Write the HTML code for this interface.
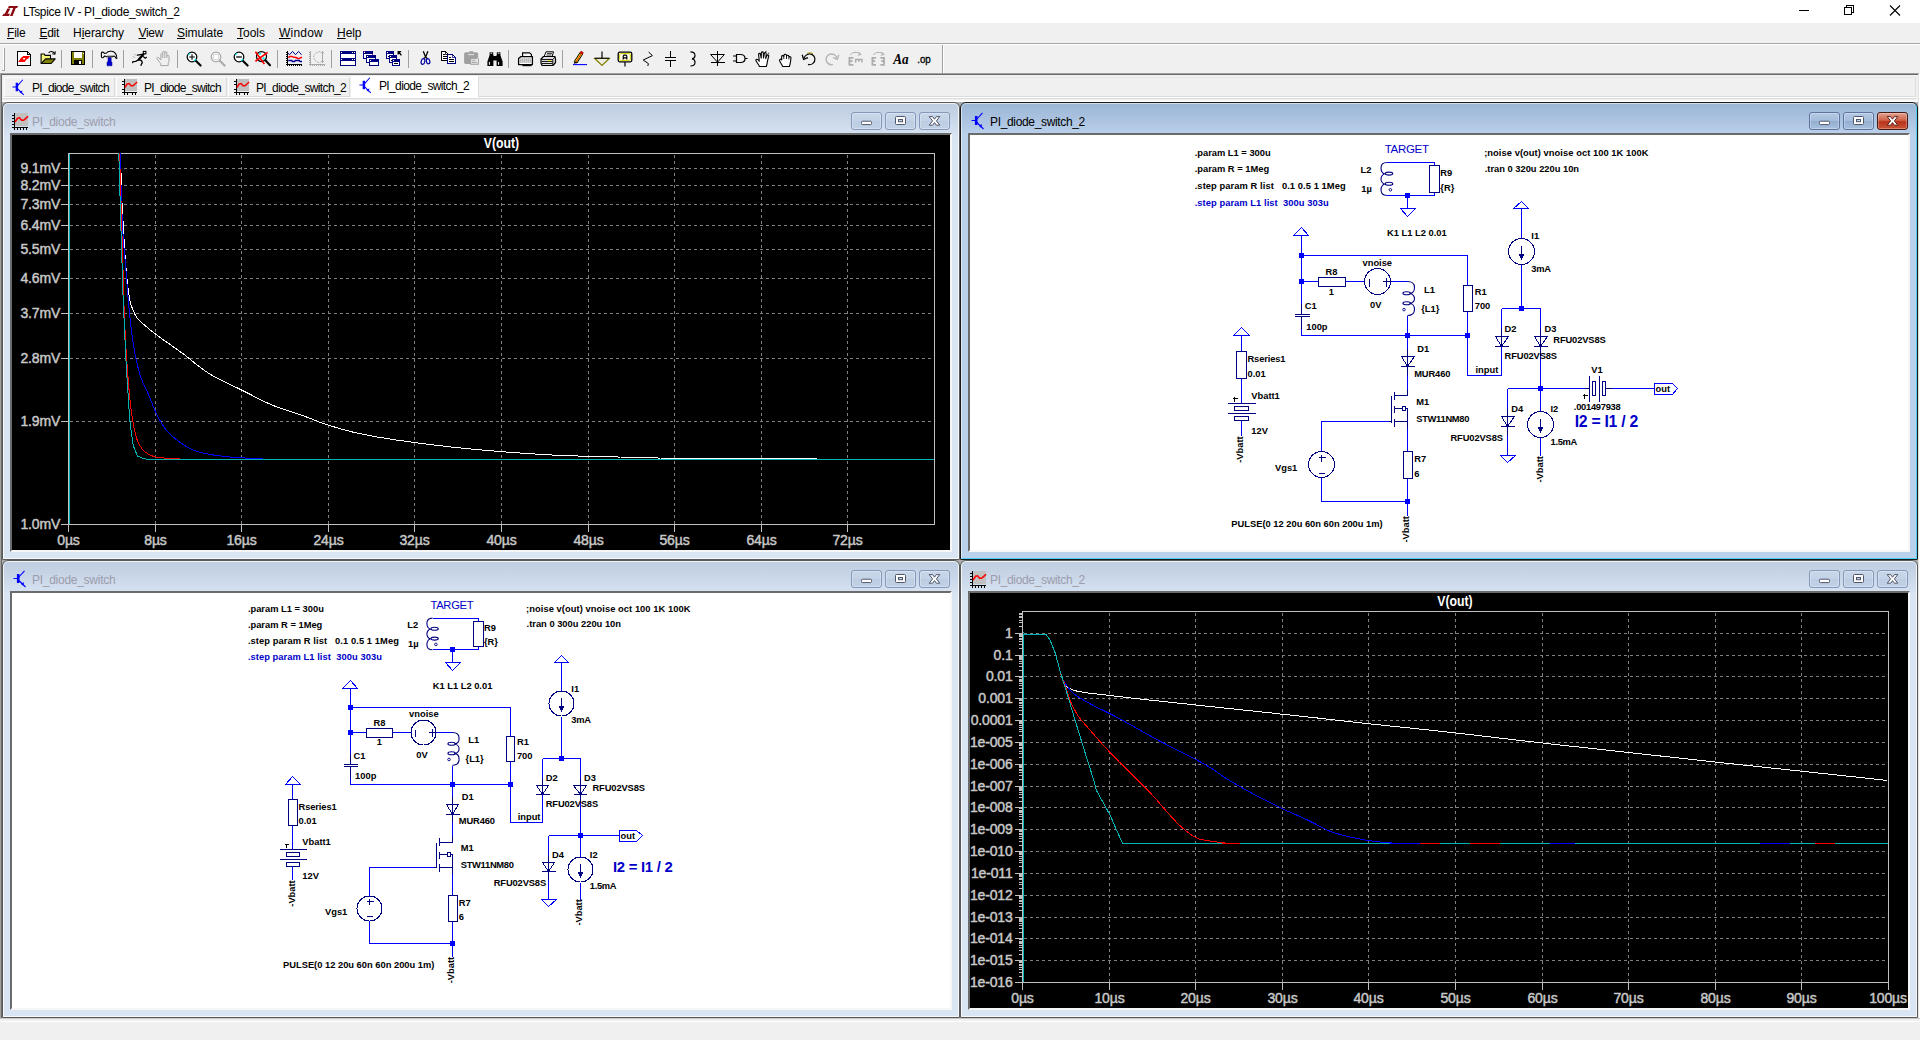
<!DOCTYPE html><html><head><meta charset="utf-8"><title>LTspice IV - PI_diode_switch_2</title><style>

html,body{margin:0;padding:0}
body{width:1920px;height:1040px;overflow:hidden;background:#f0f0f0;position:relative;font-family:"Liberation Sans",sans-serif;font-size:12px;color:#000}
.abs{position:absolute}
.t{position:absolute;white-space:pre;line-height:1}
svg{position:absolute;left:0;top:0;overflow:visible}


#tb{position:absolute;left:0;top:0;width:1920px;height:23px;background:#fff}
#mb{position:absolute;left:0;top:23px;width:1920px;height:20px;background:#f0f0f0}
#mb .t{top:3px;font-size:12px;line-height:14px}
#mb u{text-decoration:underline;text-underline-offset:1px}
#tl{position:absolute;left:0;top:43px;width:1920px;height:31px;background:#f0f0f0;border-top:1px solid #a6a6a6;box-sizing:border-box}
#tabs{position:absolute;left:0;top:73px;width:1920px;height:29px;background:#f0f0f0;box-sizing:border-box}
.tab{position:absolute;top:4px;height:20px;box-sizing:border-box;border:1px solid #dadada;border-left-color:#fcfcfc;border-top-color:#fcfcfc;background:#f0f0f0}
.tab.act{background:#fff;border-color:#fff;top:3px;height:22px}
.tab .t{font-size:12px;line-height:14px;top:3px}
#sb{position:absolute;left:0;top:1018px;width:1920px;height:22px;background:#f0f0f0}


.win{position:absolute;box-sizing:border-box;border:1px solid #5a5a5a;border-radius:6px 6px 1px 1px;overflow:hidden}
.win.in{background:linear-gradient(#c0cee1 0px,#c6d4e6 12px,#d6e2f1 31px,#d9e5f3 34px,#d9e5f3 100%)}
.win.ac{background:linear-gradient(#9ab5d5 0px,#a6bfdd 12px,#bad0eb 31px,#b9d1ea 34px,#b9d1ea 100%);border-color:#1a1a1a}
.win .hl{position:absolute;left:0;top:0;right:0;bottom:0;border:1px solid rgba(255,255,255,.75);border-radius:5px 5px 0 0;pointer-events:none}
.win.ac .hl{border-color:rgba(255,255,255,.55) #4fcff5 #4fcff5 rgba(255,255,255,.55)}
.win .cl{position:absolute;left:7px;top:30px;box-sizing:border-box;width:942px;height:419px;border-style:solid;border-width:2px;border-color:#6b6b6b #f6f6f6 #f6f6f6 #6b6b6b;overflow:hidden}
.win .cl::before{content:"";position:absolute;left:-2px;top:-2px;right:-2px;bottom:-2px;border:1px solid;border-color:#9a9ea6 transparent transparent #9a9ea6;pointer-events:none}
.win .tt{position:absolute;left:29px;top:12px;font-size:12px;line-height:14px;white-space:pre}
.win.in .tt{color:#9c9cac}
.win.ac .tt{color:#000}
.wb{position:absolute;top:9px;width:31px;height:18px;box-sizing:border-box;border:1px solid #8597ba;border-radius:3px;background:linear-gradient(#c9d7e9,#c3d2e6 48%,#bccce2 52%,#c2d2e6);box-shadow:inset 0 0 0 1px rgba(255,255,255,.3)}
.win.ac .wb{border-color:#5d74a0;background:linear-gradient(#b4c9e4,#a4bcdb 50%,#94aed2 52%,#a8c0de)}
.win.ac .wb.x{border-color:#4a1810;background:linear-gradient(#e0a090,#d0634a 45%,#b8341a 55%,#c9543a);box-shadow:inset 0 0 0 1px rgba(255,255,255,.3)}

</style></head><body>
<div id="tb">
<svg width="16" height="14" viewBox="0 0 16 14" style="left:2px;top:5px"><g fill="#8c0a14"><path d="M5.4 3.4H8.4L5.6 8.8H8L7 10.9H0.2L1.6 8.8H2.8Z"/><path d="M6.9 1.1H16L15.2 3H13.8L10.6 10.9H8L11.2 3H6Z"/></g></svg>
<div class="t" style="left:23px;top:5px;font-size:12px;line-height:14px;letter-spacing:-0.31px">LTspice IV - PI_diode_switch_2</div>
<svg width="140" height="23" viewBox="0 0 140 23" style="left:1780px;top:0" shape-rendering="crispEdges"><g stroke="#000" fill="none" stroke-width="1"><path d="M19 10.5H29"/><path d="M64.5 7.5H71.5V14.5H64.5Z"/><path d="M66.5 7.5V5.5H73.5V12.5H71.5"/></g><g stroke="#000" fill="none" stroke-width="1.1" shape-rendering="auto"><path d="M110 5.5L120 15.5M120 5.5L110 15.5"/></g></svg>
</div>
<div id="mb">
<div class="t" style="left:7px;letter-spacing:-0.21px"><u>F</u>ile</div>
<div class="t" style="left:39.5px;letter-spacing:-0.3px"><u>E</u>dit</div>
<div class="t" style="left:73px;letter-spacing:-0.04px">H<u>i</u>erarchy</div>
<div class="t" style="left:138.5px;letter-spacing:-0.32px"><u>V</u>iew</div>
<div class="t" style="left:177px;letter-spacing:-0.09px"><u>S</u>imulate</div>
<div class="t" style="left:237px;letter-spacing:0px"><u>T</u>ools</div>
<div class="t" style="left:279px;letter-spacing:0.22px"><u>W</u>indow</div>
<div class="t" style="left:337px;letter-spacing:-0.05px"><u>H</u>elp</div>
</div>
<div id="tl">
<div class="abs" style="left:0;top:0;width:1920px;height:1px;background:#fff"></div>
<div class="abs" style="left:3px;top:4px;width:1px;height:22px;background:#fff"></div><div class="abs" style="left:4px;top:4px;width:1px;height:22px;background:#a0a0a0"></div><div class="abs" style="left:2px;top:26px;width:3px;height:1px;background:#a0a0a0"></div>
<svg width="16" height="16" viewBox="0 0 16 16" style="left:16px;top:7px"><g shape-rendering="crispEdges"><path d="M1.5 0.5H11.5L14.5 3.5V14.5H1.5Z" fill="#fff" stroke="#000"/><path d="M11.5 0.5V3.5H14.5" fill="none" stroke="#000"/></g><path d="M2.1 10.9L5 7L7.3 5H14L12.4 7.6L11 8L8.6 10.9Z" fill="#ff0000"/><path d="M7.4 7H9.4L8.8 8.6H6.8Z" fill="#fff"/></svg>
<svg width="16" height="16" viewBox="0 0 16 16" style="left:39.5px;top:6px"><path d="M1.1 13.4V4H4.2L5.1 5.4H10.5V9" fill="#f6f67a" stroke="#000" stroke-width="1.1"/><path d="M1.2 13.5L5.6 8.9H15.2L11.2 13.5Z" fill="#808000" stroke="#000" stroke-width="1.1" stroke-linejoin="round"/><path d="M8.6 3C9.8 1.2 12.8 0.8 14.6 3.4" fill="none" stroke="#000" stroke-width="1.1"/><path d="M15.3 1.4L14.9 4.2L12.2 3.7" fill="none" stroke="#000" stroke-width="1.1"/></svg>
<div class="abs" style="left:61px;top:6px;width:1px;height:18px;background:#a0a0a0"></div>
<svg width="16" height="16" viewBox="0 0 16 16" style="left:70px;top:6px"><g shape-rendering="crispEdges"><rect x="1.5" y="1.5" width="13" height="13" fill="#808000" stroke="#000"/><rect x="4" y="2" width="8" height="5.5" fill="#fff"/><rect x="4" y="10" width="7.5" height="4.5" fill="#000"/><rect x="9" y="11" width="1.6" height="3" fill="#fff"/><rect x="13" y="2.5" width="1" height="1.2" fill="#fff"/></g></svg>
<div class="abs" style="left:92px;top:6px;width:1px;height:18px;background:#a0a0a0"></div>
<svg width="16" height="16" viewBox="0 0 16 16" style="left:101px;top:7px"><path d="M7 6.6H10.2V11H11V14.8H6V11H7Z" fill="#0000d0" stroke="#000090" stroke-width=".5"/><path d="M0.4 2.2C0.4 1.2 1 1 1.8 1L3.6 2.4L5.6 2C6.4 0.7 7.4 0.2 9 0.2H10.6C12.4 0.2 13.4 1.2 14.4 2.4C15.4 3.6 16 4.8 15.8 7.4L14.7 7C14.7 6 14.2 5.4 13 5L11.4 5.8H5.6L3.8 5L1.8 6.8C0.8 6.8 0.4 6.2 0.4 5.4Z" fill="#f2f2f2" stroke="#000" stroke-width="1.1" stroke-linejoin="round"/><path d="M6 4.6H12.6" stroke="#b0b0b0" stroke-width="1"/></svg>
<div class="abs" style="left:123px;top:6px;width:1px;height:18px;background:#a0a0a0"></div>
<svg width="16" height="16" viewBox="0 0 16 16" style="left:131.5px;top:7px"><g fill="none" stroke="#000" stroke-linecap="round" stroke-linejoin="round"><path d="M11.4 3.2L6.8 8.6" stroke-width="2.3"/><path d="M10.3 3.4L5.4 4.2" stroke-width="1.2"/><path d="M6.6 8.75L3.7 10.4L0.9 10.6L0.7 11.6" stroke-width="1.3"/><path d="M6.8 8.6L9.5 9.6L10.3 11.7L9.1 13.75L9 14.4" stroke-width="1.3"/><path d="M11.4 5.6L13.2 7.2L14.4 6.3" stroke-width="1.2"/></g><rect x="11.3" y="0.4" width="2.6" height="2.4" fill="#fff" stroke="#000" stroke-width="1.1"/><path d="M0.8 5.4L3.2 6.6M2.2 3.4L4.6 4.4" stroke="#a8a8a8" stroke-width=".8"/></svg>
<svg width="16" height="16" viewBox="0 0 16 16" style="left:154.5px;top:7px"><path d="M5.9 9V3.3Q5.9 2.5 6.8 2.5Q7.75 2.5 7.75 3.3V7M7.75 3.3V1.2Q7.75 0.4 8.8 0.4Q9.8 0.4 9.8 1.2V7M9.8 1.6Q9.8 0.8 10.85 0.8Q11.9 0.8 11.9 1.6V7M11.9 5.2Q11.9 4.4 12.95 4.4Q14 4.4 14 5.2V10.6L13.2 12.6V14.6H5.7V12.6L2 7.6Q1.6 6.6 2.6 6.3Q3.4 6.2 3.9 6.9L5.9 9" fill="none" stroke="#a6a6a6" stroke-width="1" stroke-linejoin="round"/></svg>
<div class="abs" style="left:177px;top:6px;width:1px;height:18px;background:#a0a0a0"></div>
<svg width="16" height="16" viewBox="0 0 16 16" style="left:186px;top:7px"><circle cx="6" cy="6" r="4.8" fill="#fff" stroke="#000" stroke-width="1.25"/><path d="M9.8 9.8L14.6 14.6" stroke="#000" stroke-width="2.1" stroke-linecap="round"/><path d="M2.2 4.2L4.2 2.2" stroke="#00e0e0" stroke-width="1.2"/><path d="M8 10.2L10.2 8" stroke="#00e0e0" stroke-width="1.2"/><path d="M3.2 6H8.8M6 3.2V8.8" stroke="#000" stroke-width="1.1"/></svg>
<svg width="16" height="16" viewBox="0 0 16 16" style="left:209.5px;top:7px"><circle cx="6" cy="6" r="4.8" fill="#fff" stroke="#a8a8a8" stroke-width="1.25"/><path d="M9.8 9.8L14.6 14.6" stroke="#a8a8a8" stroke-width="2.1" stroke-linecap="round"/><circle cx="6" cy="6" r="3" fill="none" stroke="#d0d0d0" stroke-width="1"/></svg>
<svg width="16" height="16" viewBox="0 0 16 16" style="left:232.5px;top:7px"><circle cx="6" cy="6" r="4.8" fill="#fff" stroke="#000" stroke-width="1.25"/><path d="M9.8 9.8L14.6 14.6" stroke="#000" stroke-width="2.1" stroke-linecap="round"/><path d="M2.2 4.2L4.2 2.2" stroke="#00e0e0" stroke-width="1.2"/><path d="M8 10.2L10.2 8" stroke="#00e0e0" stroke-width="1.2"/><path d="M3.2 6H8.8" stroke="#000" stroke-width="1.3"/></svg>
<svg width="16" height="16" viewBox="0 0 16 16" style="left:255px;top:7px"><circle cx="6.5" cy="5.5" r="5" fill="#fff" stroke="#000" stroke-width="1.25"/><path d="M10.6 9.6L15 14.2" stroke="#000" stroke-width="2.1" stroke-linecap="round"/><path d="M4 3.2L6 2.6M7.6 8.4L9.4 6.4" stroke="#00e8e8" stroke-width="1.6"/><path d="M0.4 0.8L9.4 13M12.6 1.4L0.4 10.2" stroke="#ff0000" stroke-width="1.7"/></svg>
<div class="abs" style="left:277px;top:6px;width:1px;height:18px;background:#a0a0a0"></div>
<svg width="16" height="16" viewBox="0 0 16 16" style="left:286px;top:7px"><g shape-rendering="crispEdges" fill="#000"><rect x="1" y="0" width="1" height="14"/><rect x="0" y="13" width="16" height="1"/><rect x="0" y="1" width="1" height="1"/><rect x="0" y="3" width="1" height="1"/><rect x="0" y="5" width="1" height="1"/><rect x="0" y="7" width="1" height="1"/><rect x="0" y="9" width="1" height="1"/><rect x="0" y="11" width="1" height="1"/><rect x="1" y="14" width="1" height="1"/><rect x="3" y="14" width="1" height="1"/><rect x="5" y="14" width="1" height="1"/><rect x="7" y="14" width="1" height="1"/><rect x="9" y="14" width="1" height="1"/><rect x="11" y="14" width="1" height="1"/><rect x="13" y="14" width="1" height="1"/><rect x="15" y="14" width="1" height="1"/></g><polyline points="2.25,2.1 3.5,3.75 6.6,0.4 9.5,3.75 12.5,0.4 15.6,3.75" fill="none" stroke="#000090" stroke-width="1"/><polyline points="2.25,6.5 4.3,5.4 6,5.4 7.7,6.3 10.2,6.5 11.8,7.5 13.5,7.5 14.75,6.5 16,6.5" fill="none" stroke="#ff0000" stroke-width="1.5"/><polyline points="2.25,9.6 5.6,9.6 6.6,10.6 8.5,10.6 9.3,9.6 13.1,9.6 14.3,10.6 16,10.6" fill="none" stroke="#000090" stroke-width="1.5"/></svg>
<svg width="16" height="16" viewBox="0 0 16 16" style="left:309px;top:7px"><g shape-rendering="crispEdges" fill="#a8a8a8"><rect x="1" y="0" width="1" height="14"/><rect x="0" y="13" width="16" height="1"/><rect x="0" y="1" width="1" height="1"/><rect x="0" y="3" width="1" height="1"/><rect x="0" y="5" width="1" height="1"/><rect x="0" y="7" width="1" height="1"/><rect x="0" y="9" width="1" height="1"/><rect x="0" y="11" width="1" height="1"/><rect x="1" y="14" width="1" height="1"/><rect x="3" y="14" width="1" height="1"/><rect x="5" y="14" width="1" height="1"/><rect x="7" y="14" width="1" height="1"/><rect x="9" y="14" width="1" height="1"/><rect x="11" y="14" width="1" height="1"/><rect x="13" y="14" width="1" height="1"/><rect x="15" y="14" width="1" height="1"/></g><path d="M11.3 0.6C7 1 4.8 3.4 4.8 6.2C4.8 9 7 11.2 11.3 11.6" fill="none" stroke="#a8a8a8" stroke-width="1" stroke-dasharray="1.6 1"/><path d="M13.5 0.6V11.6M11.9 2.3L13.5 0.6L15.1 2.3M11.9 9.9L13.5 11.6L15.1 9.9" fill="none" stroke="#a8a8a8" stroke-width="1"/></svg>
<div class="abs" style="left:331px;top:6px;width:1px;height:18px;background:#a0a0a0"></div>
<svg width="16" height="16" viewBox="0 0 16 16" style="left:339.5px;top:7px"><g shape-rendering="crispEdges"><rect x="0" y="0" width="16" height="8" fill="#000080"/><rect x="1" y="3" width="14" height="4" fill="#fff"/><rect x="1" y="1" width="1" height="1" fill="#fff"/><rect x="12" y="1" width="1" height="1" fill="#fff"/><rect x="14" y="1" width="1" height="1" fill="#fff"/><rect x="0" y="7" width="16" height="8" fill="#000080"/><rect x="1" y="10" width="14" height="4" fill="#fff"/><rect x="1" y="8" width="1" height="1" fill="#fff"/><rect x="12" y="8" width="1" height="1" fill="#fff"/><rect x="14" y="8" width="1" height="1" fill="#fff"/></g></svg>
<svg width="16" height="16" viewBox="0 0 16 16" style="left:363px;top:7px"><g shape-rendering="crispEdges"><rect x="0" y="0" width="10" height="8" fill="#000080"/><rect x="1" y="3" width="8" height="4" fill="#fff"/><rect x="1" y="1" width="1" height="1" fill="#fff"/><rect x="3" y="4" width="10" height="8" fill="#000080"/><rect x="4" y="7" width="8" height="4" fill="#fff"/><rect x="4" y="5" width="1" height="1" fill="#fff"/><rect x="6" y="8" width="10" height="7" fill="#000080"/><rect x="7" y="11" width="8" height="3" fill="#fff"/><rect x="7" y="9" width="1" height="1" fill="#fff"/><rect x="1" y="0" width="1" height="1" fill="#d0208c"/><rect x="9" y="3" width="1" height="1" fill="#d0208c"/></g></svg>
<svg width="16" height="16" viewBox="0 0 16 16" style="left:386px;top:7px"><g shape-rendering="crispEdges"><rect x="0" y="0" width="8" height="8" fill="#000080"/><rect x="1" y="3" width="6" height="4" fill="#fff"/><rect x="1" y="1" width="1" height="1" fill="#fff"/><rect x="3" y="4" width="8" height="8" fill="#000080"/><rect x="4" y="7" width="6" height="4" fill="#fff"/><rect x="4" y="5" width="1" height="1" fill="#fff"/><rect x="6" y="8" width="8" height="7" fill="#000080"/><rect x="7" y="11" width="6" height="3" fill="#fff"/><rect x="7" y="9" width="1" height="1" fill="#fff"/><rect x="8" y="12" width="4" height="1" fill="#000"/><rect x="2" y="5" width="1.4" height="1" fill="#000"/><rect x="5" y="9" width="1.4" height="1" fill="#000"/></g><path d="M15.4 4.4L12.8 1M12.2 3.6V0.6H15.2" fill="none" stroke="#000" stroke-width="1.3"/></svg>
<div class="abs" style="left:408px;top:6px;width:1px;height:18px;background:#a0a0a0"></div>
<svg width="16" height="16" viewBox="0 0 16 16" style="left:417px;top:7px"><path d="M6.3 0.2L8.6 6.2L10.6 7.8M10.9 0.2L8.6 6.2L6.6 7.6" stroke="#000" stroke-width="1.3" fill="none"/><ellipse cx="6" cy="10.5" rx="1.8" ry="3" fill="none" stroke="#0000a0" stroke-width="1.2" transform="rotate(12 6 10.5)"/><ellipse cx="11.1" cy="10.2" rx="1.7" ry="2.6" fill="none" stroke="#0000a0" stroke-width="1.2" transform="rotate(-12 11.1 10.2)"/></svg>
<svg width="16" height="16" viewBox="0 0 16 16" style="left:438.5px;top:7px"><g shape-rendering="crispEdges"><path d="M2.5 0.5H6.5L9.5 3.5V9.5H2.5Z" fill="#fff" stroke="#000"/><path d="M4 3.5H6M4 5.5H8M4 7.5H8" stroke="#000"/><path d="M8.5 3.5H13.5L16.5 6.5V12.5H8.5Z" fill="#fff" stroke="#000080"/><path d="M10 6.5H12M10 8.5H15M10 10.5H15" stroke="#000"/></g><path d="M6.5 0.5V3.5H9.5" fill="none" stroke="#000" stroke-width=".8"/><path d="M13.5 3.5V6.5H16.5" fill="none" stroke="#000080" stroke-width=".8"/></svg>
<svg width="16" height="16" viewBox="0 0 16 16" style="left:463px;top:7px"><rect x="1.1" y="1.25" width="14" height="11.65" rx="1.6" fill="#a0a0a0"/><rect x="6.3" y="0.2" width="3.8" height="1.6" fill="#a0a0a0"/><rect x="5.1" y="3.1" width="5.8" height="1" fill="#e4e4e4"/><rect x="7.7" y="7.6" width="7.7" height="5.7" fill="#e8e8e8" stroke="#a0a0a0" stroke-width="1"/><path d="M9 9.7H12.4M9 11.5H14" stroke="#a8a8a8" stroke-width="1"/><rect x="14" y="7.1" width="1.2" height="1.2" fill="#e8e8e8"/></svg>
<svg width="16" height="16" viewBox="0 0 16 16" style="left:487px;top:7px"><g fill="#000"><path d="M2.6 1.2H6.2V4.2L7 5H9L9.8 4.2V1.2H13.4V4.2L15.6 10.5V15H9.6V9.4H6.4V15H0.4V10.5L2.6 4.2Z"/></g><path d="M3.6 2.2H5.2M10.8 2.2H12.4" stroke="#fff" stroke-width="1"/><path d="M2.4 11V13.8M11.6 11V13.8" stroke="#fff" stroke-width="1"/></svg>
<div class="abs" style="left:508px;top:6px;width:1px;height:18px;background:#a0a0a0"></div>
<svg width="16" height="16" viewBox="0 0 16 16" style="left:517px;top:7px"><path d="M5.6 5.2V1.8H12.6L14.4 3.4V5.2" fill="#fff" stroke="#000" stroke-width="1.2"/><path d="M8 2.2L9 3.4L10 2.2" fill="none" stroke="#909090" stroke-width=".8"/><path d="M1.6 7.6L4 5.6H15.4V13.6H1.6Z" fill="#fff" stroke="#000" stroke-width="1.3" stroke-linejoin="round"/><rect x="3" y="7.2" width="11" height="4.6" fill="#cfcfcf"/><path d="M3 8H14M3 9.6H14M3 11.2H14" stroke="#a0a0a0" stroke-width=".7" stroke-dasharray="1 1"/><path d="M5.4 14.6H14.6" stroke="#000" stroke-width="1.2"/></svg>
<svg width="16" height="16" viewBox="0 0 16 16" style="left:540px;top:7px"><path d="M4 6L6 0.8H13.5L12 6Z" fill="#fff" stroke="#000" stroke-linejoin="round"/><path d="M7 2.4H12M6.5 4H11.5" stroke="#000" stroke-width=".8"/><path d="M1 12V8L3.5 5.5H15L15.5 8V11.5L13 14.5H2Z" fill="#e0e0e0" stroke="#000" stroke-width="1.2" stroke-linejoin="round"/><path d="M1.2 8.5H12.8L15 6M12.8 8.5V14M1.5 10.5H12.5M2 12.5H12.5" fill="none" stroke="#000" stroke-width=".9"/><rect x="8" y="9.2" width="3" height="1" fill="#e8e000"/></svg>
<div class="abs" style="left:562px;top:6px;width:1px;height:18px;background:#a0a0a0"></div>
<svg width="16" height="16" viewBox="0 0 16 16" style="left:572px;top:7px"><path d="M1 13.6H15" stroke="#0000ff" stroke-width="1.1"/><path d="M2.4 10.4L8 1.6L10.6 3.2L5 12Z" fill="#f4e400" stroke="#000" stroke-width="1" stroke-linejoin="round"/><path d="M8 1.6L9 0.3L11.2 1.6L10.6 3.2Z" fill="#e00000" stroke="#c00000" stroke-width=".8"/><path d="M2.4 10.4L1.8 12.8L5 12Z" fill="#000"/><path d="M4 11L9.2 2.8" stroke="#e00000" stroke-width=".9"/></svg>
<svg width="16" height="16" viewBox="0 0 16 16" style="left:593.5px;top:7px"><path d="M8 0.5V7.5" stroke="#000" stroke-width="1.2"/><path d="M0.8 7.5H15.2L8 14.5Z" fill="#ecece0" stroke="#808000" stroke-width="1.2" stroke-linejoin="miter"/><path d="M0.5 7.2H15.5" stroke="#000" stroke-width="1.1"/></svg>
<svg width="16" height="16" viewBox="0 0 16 16" style="left:616.5px;top:7px"><rect x="1.2" y="1.2" width="13.6" height="9.6" rx="1.5" fill="#fffff0" stroke="#000" stroke-width="1.3"/><rect x="2.6" y="2.6" width="10.8" height="6.8" rx="1" fill="none" stroke="#d8d000" stroke-width="1"/><path d="M8 11V15.5" stroke="#000" stroke-width="1.2"/><path d="M6.2 8.6V5.2L7 4.2H9L9.8 5.2V8.6M6.2 6.8H9.8" fill="none" stroke="#000" stroke-width="1.2"/></svg>
<svg width="16" height="16" viewBox="0 0 16 16" style="left:639.5px;top:7px"><path d="M8.6 1L12.4 4.6L3.2 9L8.4 12.6L7.8 15" fill="none" stroke="#000" stroke-width="1" stroke-linejoin="miter"/></svg>
<svg width="16" height="16" viewBox="0 0 16 16" style="left:662.5px;top:7px"><g shape-rendering="crispEdges" fill="#000"><rect x="7" y="0" width="1" height="6"/><rect x="2" y="6" width="11" height="1"/><rect x="2" y="9" width="11" height="1"/><rect x="7" y="10" width="1" height="6"/></g></svg>
<svg width="16" height="16" viewBox="0 0 16 16" style="left:685px;top:7px"><path d="M5.4 0.8C8 0.8 10 2.2 10 4.6C10 6.6 8.6 7.6 7 7.8C8.6 8 10 9 10 11.2C10 13.8 8 15 5.4 15" fill="none" stroke="#000" stroke-width="1.2"/></svg>
<svg width="16" height="16" viewBox="0 0 16 16" style="left:709px;top:7px"><g shape-rendering="crispEdges" fill="none" stroke="#000" stroke-width="1"><path d="M8.5 0V15M1.5 11.5H15.5"/></g><path d="M1.6 3.5H15.4L8.5 11.2Z" fill="none" stroke="#000" stroke-width="1"/></svg>
<svg width="16" height="16" viewBox="0 0 16 16" style="left:732px;top:7px"><path d="M4.5 3.5H8.5C11.5 3.5 13 5.5 13 7.5C13 9.5 11.5 11.5 8.5 11.5H4.5Z" fill="#f4f4f4" stroke="#000" stroke-width="1.2"/><path d="M1 5H4.5M1 10H4.5M13 7.5H15.6" stroke="#000" stroke-width="1.1"/></svg>
<svg width="16" height="16" viewBox="0 0 16 16" style="left:754.5px;top:7px"><path d="M4.5 15.5C3.5 13 1.2 10.8 0.8 9.2C0.8 8 2.2 7.8 3.2 9L4.3 10.2L3.6 3.4C3.5 2.1 5.2 2 5.4 3.2L6.2 7.2L6.4 1.8C6.5 0.5 8.2 0.5 8.3 1.8L8.5 7L9.4 2.3C9.7 1.1 11.3 1.4 11.2 2.7L10.7 7.6L12.1 4.4C12.6 3.4 14 3.9 13.7 5.1L12.4 10.4C12.2 12.5 11.8 14 11.3 15.5Z" fill="#fff" stroke="#000" stroke-width="1.1" stroke-linejoin="round"/><path d="M10 1L11.5 .2M12.8 2.6L14.2 2" stroke="#000" stroke-width=".8"/></svg>
<svg width="16" height="16" viewBox="0 0 16 16" style="left:777.5px;top:7px"><path d="M4.6 15.5C4.2 13.4 2 11.6 1.6 9.6C1.4 8 2.8 7.6 3.8 8.8L3.6 5.8C3.6 4.4 5.4 4.2 5.8 5.4L6 4.2C6.2 3 8 3 8.4 4.2L8.6 5C9 3.8 10.8 4 10.8 5.2L11 6.2C11.6 5.2 13.2 5.6 13 7L12.4 11.4C12.2 13 11.8 14.2 11.4 15.5Z" fill="#fff" stroke="#000" stroke-width="1.1" stroke-linejoin="round"/><path d="M5.8 5.4V8M8.5 5V8M10.9 6.2V8.4" stroke="#000" stroke-width=".9"/></svg>
<svg width="16" height="16" viewBox="0 0 16 16" style="left:800.5px;top:7px"><path d="M3 7.2C4 3.6 8 2 11.2 3.6C14.6 5.4 14.8 10 12 12.4C10.6 13.6 8.6 14 7 13.4" fill="none" stroke="#000" stroke-width="1.2"/><path d="M6 2.4C8 1.6 10.2 1.8 12 2.8" fill="none" stroke="#a09000" stroke-width="1"/><path d="M1.2 3.8L2.6 8.4L7 6.6" fill="none" stroke="#000" stroke-width="1.3"/></svg>
<svg width="16" height="16" viewBox="0 0 16 16" style="left:823.5px;top:7px"><path d="M13 7.2C12 3.6 8 2 4.8 3.6C1.4 5.4 1.2 10 4 12.4C5.4 13.6 7.4 14 9 13.4" fill="none" stroke="#b4b4b4" stroke-width="1.4"/><path d="M14.8 3.8L13.4 8.4L9 6.6" fill="none" stroke="#b4b4b4" stroke-width="1.3"/></svg>
<svg width="16" height="16" viewBox="0 0 16 16" style="left:846.5px;top:7px"><g fill="none" stroke="#acacac"><path d="M2.4 6V14.6M2.4 6.8H6.4M2.4 10.2H5.6M2.4 13.8H6.4" stroke-width="1.8"/><path d="M8 8.4H15.6M8.7 8.4V11.6M11.8 8.4V10.8M14.9 8.4V11.6" stroke-width="1.5"/><path d="M3.4 3.8C5.4 1 10.4 0.4 13.6 3.2" stroke-width="1"/><path d="M11.8 1L14 3.6L10.8 4.2" stroke-width="1"/></g></svg>
<svg width="16" height="16" viewBox="0 0 16 16" style="left:869.5px;top:7px"><g fill="none" stroke="#acacac"><path d="M2.4 6V14.6M2.4 6.8H6M2.4 10.2H5.2M2.4 13.8H6" stroke-width="1.8"/><path d="M14 6V14.6M14 6.8H10.4M14 10.2H11.2M14 13.8H10.4" stroke-width="1.8"/><path d="M3.4 3.8C5.4 1 10.4 0.4 13.6 3.2" stroke-width="1"/><path d="M11.8 1L14 3.6L10.8 4.2" stroke-width="1"/></g></svg>
<svg width="16" height="16" viewBox="0 0 16 16" style="left:893px;top:7px"><text x="0.3" y="13.2" font-family="Liberation Serif" font-style="italic" font-weight="700" font-size="15" fill="#000" textLength="15.4" lengthAdjust="spacingAndGlyphs">Aa</text></svg>
<svg width="16" height="16" viewBox="0 0 16 16" style="left:916px;top:7px"><text x="1.2" y="11.6" font-family="Liberation Sans" font-weight="400" font-size="11.5" fill="#000" stroke="#000" stroke-width="0.35" textLength="13.6" lengthAdjust="spacingAndGlyphs">.op</text></svg>
<div class="abs" style="left:942px;top:1px;width:1px;height:28px;background:#a0a0a0"></div>
<div class="abs" style="left:943px;top:1px;width:1px;height:28px;background:#fff"></div>
</div>
<div id="tabs">
<div class="abs" style="left:0;top:0;width:1920px;height:1px;background:#a0a0a0"></div>
<div class="abs" style="left:0;top:1px;width:1920px;height:1px;background:#696969"></div>
<div class="abs" style="left:0;top:0;width:1px;height:29px;background:#a0a0a0"></div>
<div class="abs" style="left:1px;top:1px;width:1px;height:28px;background:#696969"></div>
<div class="abs" style="left:1918px;top:1px;width:1px;height:28px;background:#e3e3e3"></div>
<div class="abs" style="left:1919px;top:0px;width:1px;height:29px;background:#fff"></div>
<div class="abs" style="left:2px;top:24px;width:1914px;height:1px;background:#fff"></div>
<div class="abs" style="left:2px;top:25px;width:1914px;height:1px;background:#dcdcdc"></div>
<div class="abs" style="left:2px;top:27px;width:1916px;height:1px;background:#f6f6f6"></div>
<div class="abs" style="left:2px;top:28px;width:1916px;height:1px;background:#fff"></div>
<div class="abs" style="left:478px;top:4px;width:1438px;height:20px;box-sizing:border-box;border:1px solid #dcdcdc;border-top-color:#e6e6e6"></div>
<div class="tab" style="left:4px;width:111px"><div class="abs" style="left:7px;top:1px;transform:scale(.94);transform-origin:0 0;width:17px;height:18px"><svg width="17" height="18" viewBox="0 0 17 18"><g stroke="#0000ff" fill="none" stroke-width="1.1"><path d="M0.5 8.5H5"/><path d="M5.2 4V13" stroke-width="2.6"/><path d="M5.5 7.5L11.5 0.8"/><path d="M5.5 10L12.5 17"/></g><path d="M7.6 13.6L11.2 12.2L10 15.8Z" fill="#0000ff"/></svg></div><div class="t" style="left:27px;letter-spacing:-0.7px">PI_diode_switch</div></div>
<div class="tab" style="left:116px;width:111px"><div class="abs" style="left:5px;top:1px;transform:scale(.94);transform-origin:0 0;width:17px;height:18px"><svg width="17" height="17" viewBox="0 0 17 17" shape-rendering="crispEdges"><rect x="3" y="0" width="13" height="13" fill="#c0c0c0"/><rect x="2" y="0" width="1" height="16" fill="#000"/><rect x="0" y="14" width="16" height="1" fill="#000"/><g fill="#000"><rect x="0" y="2" width="2" height="1"/><rect x="0" y="5" width="2" height="1"/><rect x="0" y="8" width="2" height="1"/><rect x="0" y="11" width="2" height="1"/><rect x="5" y="15" width="1" height="2"/><rect x="8" y="15" width="1" height="2"/><rect x="11" y="15" width="1" height="2"/><rect x="14" y="15" width="1" height="2"/><rect x="2" y="15" width="1" height="2"/></g><polyline points="3,9 5.6,5.2 7.6,4.8 9.6,7.2 11.6,7.2 13.6,5.6 16,3.2" fill="none" stroke="#ff0000" stroke-width="1.6" shape-rendering="auto"/></svg></div><div class="t" style="left:27px;letter-spacing:-0.7px">PI_diode_switch</div></div>
<div class="tab" style="left:228px;width:122px"><div class="abs" style="left:5px;top:1px;transform:scale(.94);transform-origin:0 0;width:17px;height:18px"><svg width="17" height="17" viewBox="0 0 17 17" shape-rendering="crispEdges"><rect x="3" y="0" width="13" height="13" fill="#c0c0c0"/><rect x="2" y="0" width="1" height="16" fill="#000"/><rect x="0" y="14" width="16" height="1" fill="#000"/><g fill="#000"><rect x="0" y="2" width="2" height="1"/><rect x="0" y="5" width="2" height="1"/><rect x="0" y="8" width="2" height="1"/><rect x="0" y="11" width="2" height="1"/><rect x="5" y="15" width="1" height="2"/><rect x="8" y="15" width="1" height="2"/><rect x="11" y="15" width="1" height="2"/><rect x="14" y="15" width="1" height="2"/><rect x="2" y="15" width="1" height="2"/></g><polyline points="3,9 5.6,5.2 7.6,4.8 9.6,7.2 11.6,7.2 13.6,5.6 16,3.2" fill="none" stroke="#ff0000" stroke-width="1.6" shape-rendering="auto"/></svg></div><div class="t" style="left:27px;letter-spacing:-0.63px">PI_diode_switch_2</div></div>
<div class="tab act" style="left:351px;width:127px"><div class="abs" style="left:7px;top:0px;transform:scale(.94);transform-origin:0 0;width:17px;height:18px"><svg width="17" height="18" viewBox="0 0 17 18"><g stroke="#0000ff" fill="none" stroke-width="1.1"><path d="M0.5 8.5H5"/><path d="M5.2 4V13" stroke-width="2.6"/><path d="M5.5 7.5L11.5 0.8"/><path d="M5.5 10L12.5 17"/></g><path d="M7.6 13.6L11.2 12.2L10 15.8Z" fill="#0000ff"/></svg></div><div class="t" style="left:27px;letter-spacing:-0.63px;top:2px">PI_diode_switch_2</div></div>
</div>
<div class="abs" style="left:0;top:102px;width:1px;height:916px;background:#a0a0a0"></div>
<div class="abs" style="left:1px;top:102px;width:1px;height:916px;background:#696969"></div>
<div class="abs" style="left:1918px;top:102px;width:1px;height:916px;background:#e3e3e3"></div>
<div class="abs" style="left:1919px;top:102px;width:1px;height:916px;background:#fff"></div>
<div class="abs" style="left:2px;top:102px;width:1916px;height:916px;background:#ababab"></div>
<div id="sb"><div class="abs" style="left:0;top:0;width:1920px;height:1px;background:#c8c8c8"></div><div class="abs" style="left:0;top:3px;width:1920px;height:1px;background:#fff"></div></div>
<div class="win in" style="left:2px;top:102px;width:958px;height:458px">
<div class="hl"></div>
<div class="abs" style="left:9px;top:10px;width:17px;height:18px"><svg width="17" height="17" viewBox="0 0 17 17" shape-rendering="crispEdges"><rect x="3" y="0" width="13" height="13" fill="#c0c0c0"/><rect x="2" y="0" width="1" height="16" fill="#000"/><rect x="0" y="14" width="16" height="1" fill="#000"/><g fill="#000"><rect x="0" y="2" width="2" height="1"/><rect x="0" y="5" width="2" height="1"/><rect x="0" y="8" width="2" height="1"/><rect x="0" y="11" width="2" height="1"/><rect x="5" y="15" width="1" height="2"/><rect x="8" y="15" width="1" height="2"/><rect x="11" y="15" width="1" height="2"/><rect x="14" y="15" width="1" height="2"/><rect x="2" y="15" width="1" height="2"/></g><polyline points="3,9 5.6,5.2 7.6,4.8 9.6,7.2 11.6,7.2 13.6,5.6 16,3.2" fill="none" stroke="#ff0000" stroke-width="1.6" shape-rendering="auto"/></svg></div>
<div class="tt" style="letter-spacing:-0.27px">PI_diode_switch</div>
<div class="wb x" style="left:916px"><svg width="29" height="16" viewBox="0 0 29 16"><path d="M9.2 3.6L12.6 3.6L14.5 6.2L16.4 3.6L19.8 3.6L16.4 7.9L19.8 12.2L16.4 12.2L14.5 9.6L12.6 12.2L9.2 12.2L12.6 7.9Z" fill="#fff" stroke="#50566a" stroke-width="1" stroke-linejoin="round"/></svg></div>
<div class="wb max" style="left:882px"><svg width="29" height="16" viewBox="0 0 29 16"><rect x="9.5" y="3.5" width="10" height="8" rx="1" fill="#fff" stroke="#50566a" stroke-width="1"/><rect x="12.5" y="6.5" width="4" height="2.2" fill="#c4d3e7" stroke="#50566a" stroke-width="1"/></svg></div>
<div class="wb min" style="left:848px"><svg width="29" height="16" viewBox="0 0 29 16"><rect x="9.5" y="8.2" width="10" height="3.4" rx="1" fill="#fff" stroke="#50566a" stroke-width="1"/></svg></div>
<div class="cl" style="background:#000"><svg width="938" height="415" viewBox="0 0 938 415" font-family="Liberation Sans">
<g shape-rendering="crispEdges" fill="none">
<g stroke="#808080" stroke-width="1" stroke-dasharray="3 3">
<path d="M143.5 20.0V389.5"/>
<path d="M229.5 20.0V389.5"/>
<path d="M316.5 20.0V389.5"/>
<path d="M402.5 20.0V389.5"/>
<path d="M489.5 20.0V389.5"/>
<path d="M576.5 20.0V389.5"/>
<path d="M662.5 20.0V389.5"/>
<path d="M749.5 20.0V389.5"/>
<path d="M835.5 20.0V389.5"/>
<path d="M58.0 33.5H922.5"/>
<path d="M58.0 50.5H922.5"/>
<path d="M58.0 69.5H922.5"/>
<path d="M58.0 90.5H922.5"/>
<path d="M58.0 114.5H922.5"/>
<path d="M58.0 143.5H922.5"/>
<path d="M58.0 178.5H922.5"/>
<path d="M58.0 223.5H922.5"/>
<path d="M58.0 286.5H922.5"/>
</g>
<rect x="56.5" y="18.5" width="866.0" height="371.0" stroke="#c0c0c0" stroke-width="1"/>
<g stroke="#c0c0c0" stroke-width="1">
<path d="M143.5 389.5V396.5"/>
<path d="M229.5 389.5V396.5"/>
<path d="M316.5 389.5V396.5"/>
<path d="M402.5 389.5V396.5"/>
<path d="M489.5 389.5V396.5"/>
<path d="M576.5 389.5V396.5"/>
<path d="M662.5 389.5V396.5"/>
<path d="M749.5 389.5V396.5"/>
<path d="M835.5 389.5V396.5"/>
<path d="M56.5 389.5V396.5"/>
<path d="M49.0 33.5H56.5"/>
<path d="M49.0 50.5H56.5"/>
<path d="M49.0 69.5H56.5"/>
<path d="M49.0 90.5H56.5"/>
<path d="M49.0 114.5H56.5"/>
<path d="M49.0 143.5H56.5"/>
<path d="M49.0 178.5H56.5"/>
<path d="M49.0 223.5H56.5"/>
<path d="M49.0 286.5H56.5"/>
<path d="M49.0 389.5H56.5"/>
</g></g>
<text x="48.2" y="38.1" text-anchor="end" font-size="14" font-weight="400" fill="#c8c8c8" letter-spacing="-0.15" stroke="#c8c8c8" stroke-width="0.45">9.1mV</text>
<text x="48.2" y="55.1" text-anchor="end" font-size="14" font-weight="400" fill="#c8c8c8" letter-spacing="-0.15" stroke="#c8c8c8" stroke-width="0.45">8.2mV</text>
<text x="48.2" y="74.1" text-anchor="end" font-size="14" font-weight="400" fill="#c8c8c8" letter-spacing="-0.15" stroke="#c8c8c8" stroke-width="0.45">7.3mV</text>
<text x="48.2" y="95.1" text-anchor="end" font-size="14" font-weight="400" fill="#c8c8c8" letter-spacing="-0.15" stroke="#c8c8c8" stroke-width="0.45">6.4mV</text>
<text x="48.2" y="119.1" text-anchor="end" font-size="14" font-weight="400" fill="#c8c8c8" letter-spacing="-0.15" stroke="#c8c8c8" stroke-width="0.45">5.5mV</text>
<text x="48.2" y="148.1" text-anchor="end" font-size="14" font-weight="400" fill="#c8c8c8" letter-spacing="-0.15" stroke="#c8c8c8" stroke-width="0.45">4.6mV</text>
<text x="48.2" y="183.1" text-anchor="end" font-size="14" font-weight="400" fill="#c8c8c8" letter-spacing="-0.15" stroke="#c8c8c8" stroke-width="0.45">3.7mV</text>
<text x="48.2" y="228.1" text-anchor="end" font-size="14" font-weight="400" fill="#c8c8c8" letter-spacing="-0.15" stroke="#c8c8c8" stroke-width="0.45">2.8mV</text>
<text x="48.2" y="291.1" text-anchor="end" font-size="14" font-weight="400" fill="#c8c8c8" letter-spacing="-0.15" stroke="#c8c8c8" stroke-width="0.45">1.9mV</text>
<text x="48.2" y="394.1" text-anchor="end" font-size="14" font-weight="400" fill="#c8c8c8" letter-spacing="-0.15" stroke="#c8c8c8" stroke-width="0.45">1.0mV</text>
<text x="56.5" y="409.5" text-anchor="middle" font-size="14" font-weight="400" fill="#c8c8c8" letter-spacing="-0.15" stroke="#c8c8c8" stroke-width="0.45">0µs</text>
<text x="143.5" y="409.5" text-anchor="middle" font-size="14" font-weight="400" fill="#c8c8c8" letter-spacing="-0.15" stroke="#c8c8c8" stroke-width="0.45">8µs</text>
<text x="229.5" y="409.5" text-anchor="middle" font-size="14" font-weight="400" fill="#c8c8c8" letter-spacing="-0.15" stroke="#c8c8c8" stroke-width="0.45">16µs</text>
<text x="316.5" y="409.5" text-anchor="middle" font-size="14" font-weight="400" fill="#c8c8c8" letter-spacing="-0.15" stroke="#c8c8c8" stroke-width="0.45">24µs</text>
<text x="402.5" y="409.5" text-anchor="middle" font-size="14" font-weight="400" fill="#c8c8c8" letter-spacing="-0.15" stroke="#c8c8c8" stroke-width="0.45">32µs</text>
<text x="489.5" y="409.5" text-anchor="middle" font-size="14" font-weight="400" fill="#c8c8c8" letter-spacing="-0.15" stroke="#c8c8c8" stroke-width="0.45">40µs</text>
<text x="576.5" y="409.5" text-anchor="middle" font-size="14" font-weight="400" fill="#c8c8c8" letter-spacing="-0.15" stroke="#c8c8c8" stroke-width="0.45">48µs</text>
<text x="662.5" y="409.5" text-anchor="middle" font-size="14" font-weight="400" fill="#c8c8c8" letter-spacing="-0.15" stroke="#c8c8c8" stroke-width="0.45">56µs</text>
<text x="749.5" y="409.5" text-anchor="middle" font-size="14" font-weight="400" fill="#c8c8c8" letter-spacing="-0.15" stroke="#c8c8c8" stroke-width="0.45">64µs</text>
<text x="835.5" y="409.5" text-anchor="middle" font-size="14" font-weight="400" fill="#c8c8c8" letter-spacing="-0.15" stroke="#c8c8c8" stroke-width="0.45">72µs</text>
<text x="489.5" y="12.9" text-anchor="middle" font-size="13.8" font-weight="700" fill="#fff" textLength="35.4" lengthAdjust="spacingAndGlyphs">V(out)</text>
<polyline points="108.5,18.0 108.5,20.0 108.6,22.0 108.6,24.0 108.7,26.0 108.7,28.0 108.7,30.0 108.8,32.0 108.9,34.1 108.9,36.1 109.0,38.1 109.0,40.1 109.1,42.1 109.1,44.1 109.2,46.1 109.3,48.1 109.3,50.1 109.4,52.1 109.5,54.1 109.5,56.1 109.6,58.1 109.7,60.1 109.8,62.1 109.9,64.1 109.9,66.2 110.0,68.2 110.1,70.2 110.2,72.2 110.3,74.2 110.4,76.2 110.5,78.2 110.6,80.2 110.7,82.2 110.8,84.2 111.0,86.2 111.1,88.2 111.2,90.2 111.3,92.2 111.4,94.2 111.5,96.2 111.7,98.2 111.8,100.2 111.9,102.2 112.0,104.2 112.1,106.2 112.3,108.2 112.4,110.2 112.5,112.2 112.6,114.3 112.8,116.3 112.9,118.3 113.0,120.3 113.2,122.3 113.3,124.3 113.5,126.3 113.6,128.3 113.8,130.3 113.9,132.3 114.1,134.3 114.3,136.3 114.5,138.3 114.6,140.3 114.8,142.3 115.0,144.3 115.2,146.3 115.4,148.3 115.7,150.3 115.9,152.3 116.1,154.3 116.4,156.3 116.7,158.3 117.0,160.2 117.3,162.2 117.7,164.2 118.1,166.1 118.6,168.1 119.1,170.0 119.8,171.9 120.5,173.8 121.3,175.6 122.1,177.5 122.9,179.4 123.9,181.1 125.0,182.8 126.2,184.3 127.6,185.7 129.1,187.1 130.6,188.4 132.2,189.8 133.7,191.1 135.2,192.4 136.7,193.7 138.3,195.0 139.8,196.2 141.4,197.5 143.0,198.7 144.6,199.9 146.2,201.1 147.8,202.3 149.5,203.5 151.1,204.6 152.7,205.8 154.4,206.9 156.0,208.1 157.7,209.2 159.3,210.4 161.0,211.5 162.6,212.7 164.3,213.8 165.9,215.0 167.5,216.2 169.2,217.4 170.8,218.6 172.4,219.8 174.0,221.0 175.5,222.3 177.1,223.5 178.7,224.8 180.3,226.1 181.8,227.3 183.4,228.6 185.0,229.8 186.6,231.1 188.2,232.3 189.8,233.5 191.4,234.7 193.0,235.8 194.7,237.0 196.3,238.1 198.0,239.1 199.7,240.1 201.4,241.1 203.2,242.1 204.9,243.1 206.7,244.0 208.5,244.9 210.3,245.8 212.1,246.7 213.9,247.6 215.7,248.5 217.5,249.3 219.4,250.2 221.2,251.0 223.0,251.9 224.8,252.7 226.7,253.6 228.5,254.5 230.3,255.4 232.1,256.3 233.9,257.2 235.6,258.1 237.4,259.0 239.2,259.9 241.0,260.9 242.8,261.8 244.6,262.7 246.4,263.6 248.2,264.5 250.0,265.4 251.8,266.3 253.6,267.1 255.4,268.0 257.3,268.8 259.1,269.6 260.9,270.4 262.8,271.1 264.7,271.8 266.5,272.5 268.4,273.2 270.3,273.8 272.2,274.5 274.1,275.1 276.0,275.7 278.0,276.3 279.9,276.9 281.8,277.5 283.7,278.1 285.6,278.8 287.5,279.4 289.4,280.1 291.3,280.8 293.2,281.5 295.1,282.2 296.9,282.9 298.8,283.7 300.7,284.4 302.5,285.1 304.4,285.9 306.3,286.6 308.2,287.3 310.1,288.0 311.9,288.7 313.8,289.3 315.7,289.9 317.7,290.5 319.6,291.1 321.5,291.7 323.4,292.3 325.3,292.9 327.3,293.4 329.2,294.0 331.1,294.5 333.1,295.1 335.0,295.6 337.0,296.1 338.9,296.6 340.9,297.1 342.8,297.6 344.8,298.0 346.7,298.4 348.7,298.8 350.6,299.2 352.6,299.6 354.6,300.0 356.5,300.4 358.5,300.8 360.5,301.1 362.5,301.5 364.4,301.8 366.4,302.2 368.4,302.5 370.4,302.8 372.4,303.1 374.3,303.4 376.3,303.8 378.3,304.1 380.3,304.4 382.3,304.7 384.3,305.0 386.3,305.2 388.3,305.5 390.2,305.8 392.2,306.1 394.2,306.4 396.2,306.6 398.2,306.9 400.2,307.2 402.2,307.5 404.2,307.7 406.2,308.0 408.2,308.3 410.1,308.5 412.1,308.8 414.1,309.0 416.1,309.3 418.1,309.5 420.1,309.8 422.1,310.0 424.1,310.2 426.1,310.5 428.1,310.7 430.1,310.9 432.1,311.2 434.1,311.4 436.1,311.6 438.1,311.8 440.0,312.1 442.0,312.3 444.0,312.5 446.0,312.7 448.0,312.9 450.0,313.1 452.0,313.3 454.0,313.5 456.0,313.7 458.0,313.9 460.0,314.1 462.0,314.3 464.0,314.5 466.0,314.6 468.0,314.8 470.0,315.0 472.0,315.2 474.0,315.4 476.0,315.5 478.0,315.7 480.0,315.9 482.0,316.0 484.0,316.2 486.0,316.4 488.0,316.5 490.0,316.7 492.0,316.8 494.0,317.0 496.0,317.1 498.0,317.3 500.0,317.4 502.0,317.6 504.0,317.7 506.0,317.9 508.0,318.0 510.0,318.1 512.0,318.3 514.0,318.4 516.0,318.5 518.0,318.7 520.0,318.8 522.1,318.9 524.1,319.1 526.1,319.2 528.1,319.3 530.1,319.4 532.1,319.6 534.1,319.7 536.1,319.8 538.1,319.9 540.1,320.0 542.1,320.1 544.1,320.2 546.1,320.3 548.1,320.3 550.1,320.4 552.1,320.5 554.1,320.6 556.1,320.6 558.1,320.7 560.1,320.8 562.1,320.8 564.2,320.9 566.2,321.0 568.2,321.0 570.2,321.1 572.2,321.1 574.2,321.2 576.2,321.2 578.2,321.3 580.2,321.4 582.2,321.4 584.2,321.5 586.2,321.5 588.2,321.6 590.2,321.6 592.2,321.7 594.3,321.7 596.3,321.8 598.3,321.8 600.3,321.8 602.3,321.9 604.3,321.9 606.3,322.0 608.3,322.0 610.3,322.1 612.3,322.1 614.3,322.2 616.3,322.2 618.3,322.3 620.3,322.3 622.3,322.4 624.4,322.4 626.4,322.5 628.4,322.5 630.4,322.6 632.4,322.6 634.4,322.7 636.4,322.7 638.4,322.8 640.4,322.8 642.4,322.9 644.4,322.9 646.4,323.0 648.4,323.0 650.4,323.1 652.5,323.1 654.5,323.1 656.5,323.2 658.5,323.2 660.5,323.2 662.5,323.3 664.5,323.3 666.5,323.3 668.5,323.4 670.5,323.4 672.5,323.4 674.5,323.4 676.5,323.4 678.5,323.4 680.5,323.4 682.6,323.4 684.6,323.4 686.6,323.5 688.6,323.5 690.6,323.5 692.6,323.5 694.6,323.5 696.6,323.5 698.6,323.5 700.6,323.5 702.6,323.5 704.6,323.5 706.6,323.5 708.7,323.5 710.7,323.5 712.7,323.5 714.7,323.6 716.7,323.6 718.7,323.6 720.7,323.6 722.7,323.6 724.7,323.6 726.7,323.6 728.7,323.6 730.7,323.6 732.7,323.6 734.7,323.6 736.8,323.6 738.8,323.6 740.8,323.6 742.8,323.6 744.8,323.6 746.8,323.6 748.8,323.6 750.8,323.6 752.8,323.6 754.8,323.6 756.8,323.6 758.8,323.6 760.8,323.6 762.8,323.6 764.9,323.6 766.9,323.6 768.9,323.6 770.9,323.6 772.9,323.6 774.9,323.6 776.9,323.6 778.9,323.6 780.9,323.6 782.9,323.6 784.9,323.6 786.9,323.6 788.9,323.6 790.9,323.6 793.0,323.6 795.0,323.6 797.0,323.6 799.0,323.6 801.0,323.6 803.0,323.6 805.0,323.6" fill="none" stroke="#ffffff" stroke-width="1" shape-rendering="crispEdges"/>
<polyline points="108.0,18.0 108.0,20.0 108.1,22.0 108.2,24.0 108.2,26.1 108.3,28.1 108.3,30.1 108.4,32.1 108.4,34.1 108.5,36.1 108.6,38.1 108.6,40.1 108.7,42.2 108.8,44.2 108.8,46.2 108.9,48.2 109.0,50.2 109.0,52.2 109.1,54.2 109.2,56.2 109.2,58.3 109.3,60.3 109.4,62.3 109.5,64.3 109.5,66.3 109.6,68.3 109.7,70.3 109.8,72.3 109.9,74.4 109.9,76.4 110.0,78.4 110.1,80.4 110.2,82.4 110.3,84.4 110.4,86.4 110.5,88.4 110.6,90.4 110.7,92.5 110.8,94.5 110.9,96.5 111.0,98.5 111.2,100.5 111.3,102.5 111.4,104.5 111.6,106.5 111.7,108.5 111.9,110.5 112.0,112.5 112.2,114.6 112.4,116.6 112.5,118.6 112.7,120.6 112.9,122.6 113.1,124.6 113.2,126.6 113.4,128.6 113.6,130.6 113.8,132.6 113.9,134.6 114.1,136.6 114.3,138.6 114.4,140.6 114.6,142.6 114.7,144.7 114.9,146.7 115.0,148.7 115.2,150.7 115.3,152.7 115.5,154.7 115.6,156.7 115.8,158.7 115.9,160.7 116.1,162.7 116.3,164.7 116.4,166.7 116.6,168.7 116.8,170.8 117.0,172.8 117.2,174.8 117.4,176.8 117.6,178.8 117.8,180.8 118.0,182.8 118.2,184.8 118.4,186.8 118.7,188.8 118.9,190.8 119.1,192.8 119.4,194.8 119.6,196.8 119.9,198.8 120.1,200.8 120.4,202.8 120.7,204.8 121.0,206.8 121.3,208.8 121.6,210.7 121.9,212.7 122.3,214.7 122.6,216.7 123.0,218.7 123.4,220.7 123.8,222.6 124.2,224.6 124.6,226.6 125.1,228.6 125.5,230.5 126.0,232.5 126.5,234.4 127.1,236.4 127.6,238.3 128.2,240.2 128.8,242.1 129.5,244.0 130.2,245.8 131.0,247.7 131.9,249.5 132.7,251.4 133.6,253.2 134.4,255.0 135.3,256.9 136.1,258.7 136.9,260.6 137.7,262.4 138.5,264.3 139.2,266.2 140.0,268.0 140.7,269.9 141.4,271.8 142.2,273.7 143.0,275.5 143.8,277.3 144.7,279.2 145.6,280.9 146.5,282.7 147.5,284.6 148.4,286.3 149.5,288.1 150.5,289.8 151.6,291.5 152.8,293.2 154.0,294.7 155.2,296.2 156.6,297.7 158.0,299.1 159.5,300.5 161.0,301.9 162.6,303.2 164.2,304.5 165.8,305.7 167.4,306.9 169.0,308.0 170.7,309.2 172.4,310.3 174.1,311.4 175.9,312.4 177.7,313.4 179.5,314.3 181.3,315.1 183.2,315.8 185.0,316.4 186.9,317.0 188.9,317.5 190.8,317.9 192.8,318.4 194.8,318.8 196.8,319.2 198.8,319.6 200.8,319.9 202.8,320.2 204.8,320.5 206.8,320.8 208.8,321.0 210.8,321.3 212.8,321.5 214.8,321.7 216.8,321.9 218.8,322.1 220.8,322.3 222.8,322.5 224.8,322.6 226.9,322.7 228.9,322.8 230.9,322.9 232.9,323.0 234.9,323.1 236.9,323.2 238.9,323.3 240.9,323.4 242.9,323.5 245.0,323.5 247.0,323.6 249.0,323.6 251.0,323.6" fill="none" stroke="#0000ff" stroke-width="1" shape-rendering="crispEdges"/>
<polyline points="107.5,18.0 107.6,20.0 107.6,22.0 107.7,24.0 107.7,26.1 107.8,28.1 107.9,30.1 107.9,32.1 108.0,34.1 108.0,36.1 108.1,38.1 108.2,40.1 108.2,42.2 108.3,44.2 108.4,46.2 108.4,48.2 108.5,50.2 108.5,52.2 108.6,54.2 108.7,56.2 108.7,58.3 108.8,60.3 108.8,62.3 108.9,64.3 109.0,66.3 109.0,68.3 109.1,70.3 109.1,72.4 109.2,74.4 109.3,76.4 109.3,78.4 109.4,80.4 109.4,82.4 109.5,84.4 109.6,86.4 109.6,88.5 109.7,90.5 109.8,92.5 109.8,94.5 109.9,96.5 109.9,98.5 110.0,100.5 110.1,102.5 110.1,104.6 110.2,106.6 110.2,108.6 110.3,110.6 110.4,112.6 110.4,114.6 110.5,116.6 110.5,118.6 110.6,120.7 110.6,122.7 110.7,124.7 110.7,126.7 110.8,128.7 110.8,130.7 110.9,132.7 111.0,134.8 111.0,136.8 111.1,138.8 111.1,140.8 111.2,142.8 111.2,144.8 111.3,146.8 111.3,148.9 111.4,150.9 111.4,152.9 111.5,154.9 111.6,156.9 111.6,158.9 111.7,160.9 111.7,162.9 111.8,165.0 111.9,167.0 111.9,169.0 112.0,171.0 112.1,173.0 112.1,175.0 112.2,177.0 112.3,179.0 112.4,181.1 112.4,183.1 112.5,185.1 112.6,187.1 112.7,189.1 112.8,191.1 112.9,193.1 113.0,195.1 113.0,197.1 113.2,199.2 113.3,201.2 113.4,203.2 113.5,205.2 113.6,207.2 113.7,209.2 113.8,211.2 113.9,213.2 114.1,215.2 114.2,217.3 114.3,219.3 114.5,221.3 114.6,223.3 114.7,225.3 114.9,227.3 115.0,229.3 115.2,231.3 115.3,233.3 115.5,235.3 115.6,237.4 115.8,239.4 115.9,241.4 116.1,243.4 116.3,245.4 116.4,247.4 116.6,249.4 116.8,251.4 116.9,253.4 117.1,255.4 117.3,257.4 117.5,259.4 117.7,261.4 117.9,263.4 118.1,265.5 118.3,267.5 118.6,269.5 118.8,271.5 119.0,273.5 119.3,275.5 119.6,277.4 119.8,279.4 120.1,281.4 120.4,283.4 120.7,285.4 121.0,287.4 121.4,289.4 121.7,291.5 122.1,293.5 122.5,295.5 123.0,297.4 123.5,299.4 124.0,301.3 124.6,303.2 125.2,305.0 126.0,306.9 126.9,308.8 127.9,310.7 129.1,312.4 130.3,314.1 131.6,315.5 132.9,316.8 134.5,317.9 136.2,319.0 138.1,320.0 140.0,320.8 142.0,321.5 143.9,321.9 145.8,322.3 147.8,322.6 149.8,322.8 151.9,323.0 153.9,323.2 155.9,323.3 157.9,323.4 159.9,323.5 161.9,323.5 164.0,323.6 166.0,323.6 168.0,323.6" fill="none" stroke="#ff0000" stroke-width="1" shape-rendering="crispEdges"/>
<polyline points="106.8,18.0 108.9,91.9 111.1,162.7 114.2,230.4 117.8,285.8 121.2,310.4 125.5,321.2 132.6,323.8 138.0,324.5 922.0,324.5" fill="none" stroke="#00b4b4" stroke-width="1" shape-rendering="crispEdges"/>
<polyline points="57.5,18.5 57.5,389.0" fill="none" stroke="#00b4b4" stroke-width="1" shape-rendering="crispEdges"/>
</svg></div>
</div>
<div class="win ac" style="left:960px;top:102px;width:958px;height:458px">
<div class="hl"></div>
<div class="abs" style="left:10px;top:9px;width:17px;height:18px"><svg width="17" height="18" viewBox="0 0 17 18"><g stroke="#0000ff" fill="none" stroke-width="1.1"><path d="M0.5 8.5H5"/><path d="M5.2 4V13" stroke-width="2.6"/><path d="M5.5 7.5L11.5 0.8"/><path d="M5.5 10L12.5 17"/></g><path d="M7.6 13.6L11.2 12.2L10 15.8Z" fill="#0000ff"/></svg></div>
<div class="tt" style="letter-spacing:-0.34px">PI_diode_switch_2</div>
<div class="wb x" style="left:916px"><svg width="29" height="16" viewBox="0 0 29 16"><path d="M9.2 3.6L12.6 3.6L14.5 6.2L16.4 3.6L19.8 3.6L16.4 7.9L19.8 12.2L16.4 12.2L14.5 9.6L12.6 12.2L9.2 12.2L12.6 7.9Z" fill="#fff" stroke="#5a2018" stroke-width="1" stroke-linejoin="round"/></svg></div>
<div class="wb max" style="left:882px"><svg width="29" height="16" viewBox="0 0 29 16"><rect x="9.5" y="3.5" width="10" height="8" rx="1" fill="#fff" stroke="#50566a" stroke-width="1"/><rect x="12.5" y="6.5" width="4" height="2.2" fill="#c4d3e7" stroke="#50566a" stroke-width="1"/></svg></div>
<div class="wb min" style="left:848px"><svg width="29" height="16" viewBox="0 0 29 16"><rect x="9.5" y="8.2" width="10" height="3.4" rx="1" fill="#fff" stroke="#50566a" stroke-width="1"/></svg></div>
<div class="cl" style="background:#fff"><svg width="938" height="415" viewBox="0 0 938 415" font-family="Liberation Sans"><g shape-rendering="crispEdges" stroke-width="1"><path d="M416.8 27.5 C413.0 27.5 411.0 30.0 411.0 33.2 C411.0 36.4 413.0 38.9 414.8 38.9 M414.8 38.9 C413.0 38.9 411.0 41.4 411.0 44.0 C411.0 46.6 413.0 49.1 414.8 49.1 M414.8 49.1 C413.0 49.1 411.0 51.6 411.0 54.8 C411.0 58.0 413.0 60.5 416.8 60.5" fill="none" stroke="#000080" shape-rendering="auto" stroke-width="1.1"/>
<ellipse cx="419.0" cy="38.6" rx="3.8" ry="1.5" fill="none" stroke="#000080" shape-rendering="auto" stroke-width="1.1"/>
<ellipse cx="419.0" cy="48.8" rx="3.8" ry="1.5" fill="none" stroke="#000080" shape-rendering="auto" stroke-width="1.1"/>
<circle cx="420.4" cy="54.8" r="1.3" fill="none" stroke="#000080" shape-rendering="auto" stroke-width="0.9"/>
<polyline points="416.5,27.5 464.5,27.5 464.5,30.5" fill="none" stroke="#0000ff"/>
<rect x="459.5" y="30.5" width="10.0" height="27.0" fill="none" stroke="#000080"/>
<polyline points="464.5,57.5 464.5,60.5 416.5,60.5" fill="none" stroke="#0000ff"/>
<polyline points="437.5,60.5 437.5,73.5" fill="none" stroke="#0000ff"/>
<polygon points="430.5,73.5 445.5,73.5 437.5,81.5" fill="none" stroke="#0000ff"/>
<rect x="435.0" y="58.0" width="5" height="5" fill="#0000ff"/>
<polygon points="323.5,100.5 338.5,100.5 331.5,92.5" fill="none" stroke="#0000ff"/>
<polyline points="331.5,100.5 331.5,168.5" fill="none" stroke="#0000ff"/>
<polyline points="331.5,168.5 331.5,179.5" fill="none" stroke="#000080"/>
<polyline points="324.5,179.5 339.5,179.5" fill="none" stroke="#000080"/>
<polyline points="324.5,181.5 339.5,181.5" fill="none" stroke="#000080"/>
<polyline points="331.5,181.5 331.5,193.5" fill="none" stroke="#000080"/>
<polyline points="331.5,193.5 331.5,200.5 497.5,200.5" fill="none" stroke="#0000ff"/>
<polyline points="331.5,120.5 497.5,120.5 497.5,150.5" fill="none" stroke="#0000ff"/>
<rect x="493.5" y="150.5" width="9.0" height="26.0" fill="none" stroke="#000080"/>
<polyline points="497.5,176.5 497.5,240.5 531.5,240.5 531.5,211.5" fill="none" stroke="#0000ff"/>
<polyline points="331.5,146.5 348.5,146.5" fill="none" stroke="#0000ff"/>
<rect x="348.5" y="142.5" width="27.0" height="9.0" fill="none" stroke="#000080"/>
<polyline points="375.5,146.5 394.5,146.5" fill="none" stroke="#0000ff"/>
<circle cx="407.5" cy="146.5" r="13.0" fill="none" stroke="#000080"/>
<polyline points="399.5,143.5 399.5,151.5" fill="none" stroke="#000080"/>
<polyline points="412.5,146.5 421.5,146.5" fill="none" stroke="#000080"/>
<polyline points="416.5,142.5 416.5,151.5" fill="none" stroke="#000080"/>
<polyline points="421.5,146.5 437.5,146.5" fill="none" stroke="#0000ff"/>
<path d="M437.5 146.5 C442.5 146.5 444.5 149.0 444.5 152.5 C444.5 156.0 442.5 158.5 439.5 158.5 M439.5 158.5 C442.5 158.5 444.5 161.0 444.5 163.5 C444.5 166.0 442.5 168.5 439.5 168.5 M439.5 168.5 C442.5 168.5 444.5 171.0 444.5 174.5 C444.5 178.0 442.5 180.5 437.5 180.5" fill="none" stroke="#000080" shape-rendering="auto" stroke-width="1.1"/>
<ellipse cx="436.7" cy="158.2" rx="3.8" ry="1.5" fill="none" stroke="#000080" shape-rendering="auto" stroke-width="1.1"/>
<ellipse cx="436.7" cy="168.2" rx="3.8" ry="1.5" fill="none" stroke="#000080" shape-rendering="auto" stroke-width="1.1"/>
<circle cx="434.0" cy="174.6" r="1.3" fill="none" stroke="#000080" shape-rendering="auto" stroke-width="0.9"/>
<polyline points="437.5,180.5 437.5,213.5" fill="none" stroke="#0000ff"/>
<polyline points="437.5,213.5 437.5,239.5" fill="none" stroke="#000080"/>
<polygon points="431.5,221.5 444.5,221.5 437.5,231.5" fill="none" stroke="#000080"/>
<polyline points="430.5,231.5 444.5,231.5" fill="none" stroke="#000080"/>
<polyline points="437.5,239.5 437.5,254.5" fill="none" stroke="#0000ff"/>
<polyline points="437.5,254.5 437.5,260.5 424.5,260.5" fill="none" stroke="#000080"/>
<polyline points="424.5,256.5 424.5,264.5" fill="none" stroke="#000080"/>
<polyline points="421.5,260.5 421.5,287.5" fill="none" stroke="#000080"/>
<polyline points="424.5,270.5 424.5,277.5" fill="none" stroke="#000080"/>
<polyline points="424.5,273.5 432.5,273.5" fill="none" stroke="#000080"/>
<rect x="432.5" y="271.5" width="3.0" height="4.0" fill="none" stroke="#000080"/>
<polyline points="435.5,273.5 437.5,273.5 437.5,293.5" fill="none" stroke="#000080"/>
<polyline points="424.5,283.5 424.5,291.5" fill="none" stroke="#000080"/>
<polyline points="424.5,286.5 437.5,286.5" fill="none" stroke="#000080"/>
<polyline points="418.5,286.5 421.5,286.5" fill="none" stroke="#000080"/>
<polyline points="418.5,286.5 351.5,286.5 351.5,316.5" fill="none" stroke="#0000ff"/>
<polyline points="437.5,293.5 437.5,316.5" fill="none" stroke="#0000ff"/>
<rect x="433.5" y="316.5" width="9.0" height="27.0" fill="none" stroke="#000080"/>
<polyline points="437.5,343.5 437.5,380.5" fill="none" stroke="#0000ff"/>
<circle cx="351.5" cy="329.5" r="13.0" fill="none" stroke="#000080"/>
<polyline points="348.5,322.5 355.5,322.5" fill="none" stroke="#000080"/>
<polyline points="351.5,319.5 351.5,326.5" fill="none" stroke="#000080"/>
<polyline points="348.5,338.5 354.5,338.5" fill="none" stroke="#000080"/>
<polyline points="351.5,342.5 351.5,366.5 437.5,366.5" fill="none" stroke="#0000ff"/>
<polygon points="543.5,73.5 558.5,73.5 551.5,66.5" fill="none" stroke="#0000ff"/>
<polyline points="551.5,73.5 551.5,103.5" fill="none" stroke="#0000ff"/>
<circle cx="551.5" cy="116.5" r="13.0" fill="none" stroke="#000080"/>
<polyline points="551.5,110.5 551.5,123.5" fill="none" stroke="#000080"/>
<polygon points="549.5,119.5 551.5,123.5 553.5,119.5" fill="none" stroke="#000080"/>
<polyline points="551.5,129.5 551.5,173.5" fill="none" stroke="#0000ff"/>
<polyline points="531.5,173.5 570.5,173.5" fill="none" stroke="#0000ff"/>
<polyline points="531.5,173.5 531.5,193.5" fill="none" stroke="#0000ff"/>
<polyline points="531.5,193.5 531.5,211.5" fill="none" stroke="#000080"/>
<polygon points="525.5,201.5 538.5,201.5 531.5,211.5" fill="none" stroke="#000080"/>
<polyline points="524.5,211.5 538.5,211.5" fill="none" stroke="#000080"/>
<polyline points="570.5,173.5 570.5,193.5" fill="none" stroke="#0000ff"/>
<polyline points="570.5,193.5 570.5,219.5" fill="none" stroke="#000080"/>
<polygon points="564.5,201.5 577.5,201.5 570.5,211.5" fill="none" stroke="#000080"/>
<polyline points="563.5,211.5 577.5,211.5" fill="none" stroke="#000080"/>
<polyline points="570.5,219.5 570.5,276.5" fill="none" stroke="#0000ff"/>
<polyline points="537.5,253.5 537.5,273.5" fill="none" stroke="#0000ff"/>
<polyline points="537.5,273.5 537.5,299.5" fill="none" stroke="#000080"/>
<polygon points="531.5,281.5 544.5,281.5 537.5,291.5" fill="none" stroke="#000080"/>
<polyline points="530.5,291.5 544.5,291.5" fill="none" stroke="#000080"/>
<polyline points="537.5,299.5 537.5,320.5" fill="none" stroke="#0000ff"/>
<polygon points="530.5,320.5 545.5,320.5 537.5,327.5" fill="none" stroke="#0000ff"/>
<circle cx="570.5" cy="289.5" r="13.0" fill="none" stroke="#000080"/>
<polyline points="570.5,283.5 570.5,296.5" fill="none" stroke="#000080"/>
<polygon points="568.5,292.5 570.5,296.5 572.5,292.5" fill="none" stroke="#000080"/>
<polyline points="570.5,302.5 570.5,320.5" fill="none" stroke="#0000ff"/>
<polyline points="537.5,253.5 614.5,253.5" fill="none" stroke="#0000ff"/>
<polyline points="614.5,253.5 619.5,253.5" fill="none" stroke="#000080"/>
<polyline points="619.5,240.5 619.5,266.5" fill="none" stroke="#000080"/>
<rect x="622.5" y="246.5" width="3.0" height="14.0" fill="none" stroke="#000080"/>
<polyline points="629.5,240.5 629.5,266.5" fill="none" stroke="#000080"/>
<rect x="632.5" y="246.5" width="3.0" height="14.0" fill="none" stroke="#000080"/>
<polyline points="635.5,253.5 642.5,253.5" fill="none" stroke="#000080"/>
<polyline points="642.5,253.5 684.5,253.5" fill="none" stroke="#0000ff"/>
<polygon points="684.5,248.5 702.5,248.5 707.5,253.5 702.5,259.5 684.5,259.5" fill="none" stroke="#0000ff"/>
<polyline points="612.5,260.5 617.5,260.5" fill="none" stroke="#000000"/>
<polyline points="614.5,258.5 614.5,263.5" fill="none" stroke="#000000"/>
<polygon points="263.5,200.5 279.5,200.5 271.5,192.5" fill="none" stroke="#0000ff"/>
<polyline points="271.5,200.5 271.5,216.5" fill="none" stroke="#0000ff"/>
<rect x="266.5" y="216.5" width="10.0" height="27.0" fill="none" stroke="#000080"/>
<polyline points="271.5,243.5 271.5,268.5" fill="none" stroke="#0000ff"/>
<polyline points="257.5,268.5 285.5,268.5" fill="none" stroke="#000080"/>
<rect x="264.5" y="271.5" width="14.0" height="4.0" fill="none" stroke="#000080"/>
<polyline points="257.5,278.5 285.5,278.5" fill="none" stroke="#000080"/>
<rect x="264.5" y="281.5" width="14.0" height="4.0" fill="none" stroke="#000080"/>
<polyline points="271.5,285.5 271.5,300.5" fill="none" stroke="#0000ff"/>
<polyline points="262.5,263.5 267.5,263.5" fill="none" stroke="#000000"/>
<polyline points="264.5,261.5 264.5,266.5" fill="none" stroke="#000000"/>
<rect x="329.0" y="118.0" width="5" height="5" fill="#0000ff"/>
<rect x="329.0" y="144.0" width="5" height="5" fill="#0000ff"/>
<rect x="435.0" y="198.0" width="5" height="5" fill="#0000ff"/>
<rect x="495.0" y="198.0" width="5" height="5" fill="#0000ff"/>
<rect x="549.0" y="171.0" width="5" height="5" fill="#0000ff"/>
<rect x="568.0" y="251.0" width="5" height="5" fill="#0000ff"/>
<rect x="435.0" y="364.0" width="5" height="5" fill="#0000ff"/></g>
<text x="224.7" y="20.8" font-size="9.33" font-weight="700" fill="#000000" xml:space="preserve">.param L1 = 300u</text>
<text x="224.7" y="37.4" font-size="9.33" font-weight="700" fill="#000000" xml:space="preserve">.param R = 1Meg</text>
<text x="224.7" y="54.2" font-size="9.33" font-weight="700" fill="#000000" letter-spacing="0.08" xml:space="preserve">.step param R list   0.1 0.5 1 1Meg</text>
<text x="224.7" y="70.8" font-size="9.33" font-weight="700" fill="#0000c8" letter-spacing="0.06" xml:space="preserve">.step param L1 list  300u 303u</text>
<text x="414.7" y="17.5" font-size="11.5" font-weight="400" fill="#0000c8" letter-spacing="-0.3" xml:space="preserve">TARGET</text>
<text x="390.5" y="38.0" font-size="9.33" font-weight="700" fill="#000000" xml:space="preserve">L2</text>
<text x="391.3" y="57.0" font-size="9.33" font-weight="700" fill="#000000" xml:space="preserve">1µ</text>
<text x="470.3" y="40.8" font-size="9.33" font-weight="700" fill="#000000" xml:space="preserve">R9</text>
<text x="470.3" y="55.8" font-size="9.33" font-weight="700" fill="#000000" xml:space="preserve">{R}</text>
<text x="417.0" y="100.8" font-size="9.33" font-weight="700" fill="#000000" xml:space="preserve">K1 L1 L2 0.01</text>
<text x="392.5" y="130.8" font-size="9.33" font-weight="700" fill="#000000" xml:space="preserve">vnoise</text>
<text x="355.5" y="139.7" font-size="9.33" font-weight="700" fill="#000000" xml:space="preserve">R8</text>
<text x="358.8" y="159.7" font-size="9.33" font-weight="700" fill="#000000" xml:space="preserve">1</text>
<text x="454.0" y="157.8" font-size="9.33" font-weight="700" fill="#000000" xml:space="preserve">L1</text>
<text x="451.2" y="176.7" font-size="9.33" font-weight="700" fill="#000000" xml:space="preserve">{L1}</text>
<text x="504.7" y="159.7" font-size="9.33" font-weight="700" fill="#000000" xml:space="preserve">R1</text>
<text x="504.7" y="174.3" font-size="9.33" font-weight="700" fill="#000000" xml:space="preserve">700</text>
<text x="334.7" y="173.7" font-size="9.33" font-weight="700" fill="#000000" xml:space="preserve">C1</text>
<text x="336.3" y="195.0" font-size="9.33" font-weight="700" fill="#000000" xml:space="preserve">100p</text>
<text x="400.0" y="172.5" font-size="9.33" font-weight="700" fill="#000000" xml:space="preserve">0V</text>
<text x="514.2" y="20.8" font-size="9.33" font-weight="700" fill="#000000" letter-spacing="0.06" xml:space="preserve">;noise v(out) vnoise oct 100 1K 100K</text>
<text x="514.7" y="37.0" font-size="9.33" font-weight="700" fill="#000000" xml:space="preserve">.tran 0 320u 220u 10n</text>
<text x="561.3" y="104.2" font-size="9.33" font-weight="700" fill="#000000" xml:space="preserve">I1</text>
<text x="561.3" y="137.0" font-size="9.33" font-weight="700" fill="#000000" letter-spacing="-0.3" xml:space="preserve">3mA</text>
<text x="534.6" y="196.7" font-size="9.33" font-weight="700" fill="#000000" xml:space="preserve">D2</text>
<text x="534.6" y="223.7" font-size="9.33" font-weight="700" fill="#000000" letter-spacing="-0.12" xml:space="preserve">RFU02VS8S</text>
<text x="574.5" y="196.7" font-size="9.33" font-weight="700" fill="#000000" xml:space="preserve">D3</text>
<text x="583.3" y="207.5" font-size="9.33" font-weight="700" fill="#000000" letter-spacing="-0.12" xml:space="preserve">RFU02VS8S</text>
<text x="505.5" y="237.5" font-size="9.33" font-weight="700" fill="#000000" xml:space="preserve">input</text>
<text x="447.2" y="216.7" font-size="9.33" font-weight="700" fill="#000000" xml:space="preserve">D1</text>
<text x="444.2" y="241.7" font-size="9.33" font-weight="700" fill="#000000" letter-spacing="-0.12" xml:space="preserve">MUR460</text>
<text x="446.3" y="270.0" font-size="9.33" font-weight="700" fill="#000000" xml:space="preserve">M1</text>
<text x="446.3" y="287.0" font-size="9.33" font-weight="700" fill="#000000" letter-spacing="-0.3" xml:space="preserve">STW11NM80</text>
<text x="541.3" y="276.7" font-size="9.33" font-weight="700" fill="#000000" xml:space="preserve">D4</text>
<text x="480.5" y="305.8" font-size="9.33" font-weight="700" fill="#000000" letter-spacing="-0.12" xml:space="preserve">RFU02VS8S</text>
<text x="580.5" y="276.7" font-size="9.33" font-weight="700" fill="#000000" xml:space="preserve">I2</text>
<text x="580.5" y="309.7" font-size="9.33" font-weight="700" fill="#000000" letter-spacing="-0.3" xml:space="preserve">1.5mA</text>
<text x="604.7" y="291.7" font-size="15.8" font-weight="700" fill="#0000c8" letter-spacing="-0.28" xml:space="preserve">I2 = I1 / 2</text>
<text x="277.5" y="227.0" font-size="9.33" font-weight="700" fill="#000000" letter-spacing="-0.12" xml:space="preserve">Rseries1</text>
<text x="277.5" y="241.7" font-size="9.33" font-weight="700" fill="#000000" xml:space="preserve">0.01</text>
<text x="281.3" y="263.7" font-size="9.33" font-weight="700" fill="#000000" xml:space="preserve">Vbatt1</text>
<text x="281.3" y="299.2" font-size="9.33" font-weight="700" fill="#000000" xml:space="preserve">12V</text>
<text x="305.0" y="336.2" font-size="9.33" font-weight="700" fill="#000000" xml:space="preserve">Vgs1</text>
<text x="444.2" y="326.7" font-size="9.33" font-weight="700" fill="#000000" xml:space="preserve">R7</text>
<text x="444.2" y="341.7" font-size="9.33" font-weight="700" fill="#000000" xml:space="preserve">6</text>
<text x="261.3" y="391.7" font-size="9.33" font-weight="700" fill="#000000" xml:space="preserve">PULSE(0 12 20u 60n 60n 200u 1m)</text>
<text x="439.2" y="407.5" font-size="9.33" font-weight="700" fill="#000000" transform="rotate(-90 439.2 407.5)" xml:space="preserve">-Vbatt</text>
<text x="273.3" y="327.8" font-size="9.33" font-weight="700" fill="#000000" transform="rotate(-90 273.3 327.8)" xml:space="preserve">-Vbatt</text>
<text x="572.5" y="347.5" font-size="9.33" font-weight="700" fill="#000000" transform="rotate(-90 572.5 347.5)" xml:space="preserve">-Vbatt</text>
<text x="621.2" y="238.0" font-size="9.33" font-weight="700" fill="#000000" xml:space="preserve">V1</text>
<text x="603.8" y="275.0" font-size="9.33" font-weight="700" fill="#000000" letter-spacing="-0.26" xml:space="preserve">.001497938</text>
<text x="685.5" y="257.0" font-size="9.33" font-weight="700" fill="#000000" xml:space="preserve">out</text></svg></div>
</div>
<div class="win in" style="left:2px;top:560px;width:958px;height:458px">
<div class="hl"></div>
<div class="abs" style="left:10px;top:9px;width:17px;height:18px"><svg width="17" height="18" viewBox="0 0 17 18"><g stroke="#0000ff" fill="none" stroke-width="1.1"><path d="M0.5 8.5H5"/><path d="M5.2 4V13" stroke-width="2.6"/><path d="M5.5 7.5L11.5 0.8"/><path d="M5.5 10L12.5 17"/></g><path d="M7.6 13.6L11.2 12.2L10 15.8Z" fill="#0000ff"/></svg></div>
<div class="tt" style="letter-spacing:-0.27px">PI_diode_switch</div>
<div class="wb x" style="left:916px"><svg width="29" height="16" viewBox="0 0 29 16"><path d="M9.2 3.6L12.6 3.6L14.5 6.2L16.4 3.6L19.8 3.6L16.4 7.9L19.8 12.2L16.4 12.2L14.5 9.6L12.6 12.2L9.2 12.2L12.6 7.9Z" fill="#fff" stroke="#50566a" stroke-width="1" stroke-linejoin="round"/></svg></div>
<div class="wb max" style="left:882px"><svg width="29" height="16" viewBox="0 0 29 16"><rect x="9.5" y="3.5" width="10" height="8" rx="1" fill="#fff" stroke="#50566a" stroke-width="1"/><rect x="12.5" y="6.5" width="4" height="2.2" fill="#c4d3e7" stroke="#50566a" stroke-width="1"/></svg></div>
<div class="wb min" style="left:848px"><svg width="29" height="16" viewBox="0 0 29 16"><rect x="9.5" y="8.2" width="10" height="3.4" rx="1" fill="#fff" stroke="#50566a" stroke-width="1"/></svg></div>
<div class="cl" style="background:#fff"><svg width="938" height="415" viewBox="0 0 938 415" font-family="Liberation Sans"><g shape-rendering="crispEdges" stroke-width="1"><path d="M420.5 25.1 C416.8 25.1 414.9 27.5 414.9 30.6 C414.9 33.7 416.8 36.1 418.6 36.1 M418.6 36.1 C416.8 36.1 414.9 38.5 414.9 41.0 C414.9 43.5 416.8 45.9 418.6 45.9 M418.6 45.9 C416.8 45.9 414.9 48.3 414.9 51.4 C414.9 54.4 416.8 56.8 420.5 56.8" fill="none" stroke="#000080" shape-rendering="auto" stroke-width="1.1"/>
<ellipse cx="422.6" cy="35.8" rx="3.7" ry="1.5" fill="none" stroke="#000080" shape-rendering="auto" stroke-width="1.1"/>
<ellipse cx="422.6" cy="45.6" rx="3.7" ry="1.5" fill="none" stroke="#000080" shape-rendering="auto" stroke-width="1.1"/>
<circle cx="423.9" cy="51.4" r="1.3" fill="none" stroke="#000080" shape-rendering="auto" stroke-width="0.9"/>
<polyline points="420.5,25.5 466.5,25.5 466.5,28.5" fill="none" stroke="#0000ff"/>
<rect x="461.5" y="28.5" width="10.0" height="25.0" fill="none" stroke="#000080"/>
<polyline points="466.5,53.5 466.5,56.5 420.5,56.5" fill="none" stroke="#0000ff"/>
<polyline points="440.5,56.5 440.5,69.5" fill="none" stroke="#0000ff"/>
<polygon points="433.5,69.5 448.5,69.5 440.5,77.5" fill="none" stroke="#0000ff"/>
<rect x="438.0" y="54.0" width="5" height="5" fill="#0000ff"/>
<polygon points="330.5,95.5 345.5,95.5 338.5,87.5" fill="none" stroke="#0000ff"/>
<polyline points="338.5,95.5 338.5,160.5" fill="none" stroke="#0000ff"/>
<polyline points="338.5,160.5 338.5,171.5" fill="none" stroke="#000080"/>
<polyline points="331.5,171.5 345.5,171.5" fill="none" stroke="#000080"/>
<polyline points="331.5,173.5 345.5,173.5" fill="none" stroke="#000080"/>
<polyline points="338.5,173.5 338.5,184.5" fill="none" stroke="#000080"/>
<polyline points="338.5,184.5 338.5,191.5 498.5,191.5" fill="none" stroke="#0000ff"/>
<polyline points="338.5,114.5 498.5,114.5 498.5,143.5" fill="none" stroke="#0000ff"/>
<rect x="494.5" y="143.5" width="8.0" height="25.0" fill="none" stroke="#000080"/>
<polyline points="498.5,168.5 498.5,229.5 530.5,229.5 530.5,201.5" fill="none" stroke="#0000ff"/>
<polyline points="338.5,139.5 354.5,139.5" fill="none" stroke="#0000ff"/>
<rect x="354.5" y="135.5" width="26.0" height="9.0" fill="none" stroke="#000080"/>
<polyline points="380.5,139.5 399.5,139.5" fill="none" stroke="#0000ff"/>
<circle cx="411.5" cy="139.5" r="12.5" fill="none" stroke="#000080"/>
<polyline points="403.5,136.5 403.5,143.5" fill="none" stroke="#000080"/>
<polyline points="416.5,139.5 424.5,139.5" fill="none" stroke="#000080"/>
<polyline points="420.5,135.5 420.5,143.5" fill="none" stroke="#000080"/>
<polyline points="424.5,139.5 440.5,139.5" fill="none" stroke="#0000ff"/>
<path d="M440.4 139.5 C445.2 139.5 447.1 141.9 447.1 145.3 C447.1 148.6 445.2 151.0 442.3 151.0 M442.3 151.0 C445.2 151.0 447.1 153.4 447.1 155.8 C447.1 158.2 445.2 160.6 442.3 160.6 M442.3 160.6 C445.2 160.6 447.1 163.0 447.1 166.4 C447.1 169.8 445.2 172.2 440.4 172.2" fill="none" stroke="#000080" shape-rendering="auto" stroke-width="1.1"/>
<ellipse cx="439.6" cy="150.7" rx="3.7" ry="1.5" fill="none" stroke="#000080" shape-rendering="auto" stroke-width="1.1"/>
<ellipse cx="439.6" cy="160.3" rx="3.7" ry="1.5" fill="none" stroke="#000080" shape-rendering="auto" stroke-width="1.1"/>
<circle cx="437.0" cy="166.5" r="1.3" fill="none" stroke="#000080" shape-rendering="auto" stroke-width="0.9"/>
<polyline points="440.5,172.5 440.5,203.5" fill="none" stroke="#0000ff"/>
<polyline points="440.5,203.5 440.5,228.5" fill="none" stroke="#000080"/>
<polygon points="434.5,211.5 446.5,211.5 440.5,221.5" fill="none" stroke="#000080"/>
<polyline points="433.5,221.5 447.5,221.5" fill="none" stroke="#000080"/>
<polyline points="440.5,228.5 440.5,242.5" fill="none" stroke="#0000ff"/>
<polyline points="440.5,242.5 440.5,249.5 427.5,249.5" fill="none" stroke="#000080"/>
<polyline points="427.5,244.5 427.5,252.5" fill="none" stroke="#000080"/>
<polyline points="424.5,249.5 424.5,274.5" fill="none" stroke="#000080"/>
<polyline points="427.5,258.5 427.5,265.5" fill="none" stroke="#000080"/>
<polyline points="427.5,261.5 435.5,261.5" fill="none" stroke="#000080"/>
<rect x="435.5" y="259.5" width="3.0" height="4.0" fill="none" stroke="#000080"/>
<polyline points="438.5,261.5 440.5,261.5 440.5,280.5" fill="none" stroke="#000080"/>
<polyline points="427.5,270.5 427.5,278.5" fill="none" stroke="#000080"/>
<polyline points="427.5,274.5 440.5,274.5" fill="none" stroke="#000080"/>
<polyline points="421.5,274.5 424.5,274.5" fill="none" stroke="#000080"/>
<polyline points="421.5,274.5 357.5,274.5 357.5,302.5" fill="none" stroke="#0000ff"/>
<polyline points="440.5,280.5 440.5,302.5" fill="none" stroke="#0000ff"/>
<rect x="436.5" y="302.5" width="9.0" height="26.0" fill="none" stroke="#000080"/>
<polyline points="440.5,328.5 440.5,363.5" fill="none" stroke="#0000ff"/>
<circle cx="357.5" cy="315.5" r="12.5" fill="none" stroke="#000080"/>
<polyline points="354.5,308.5 361.5,308.5" fill="none" stroke="#000080"/>
<polyline points="357.5,305.5 357.5,311.5" fill="none" stroke="#000080"/>
<polyline points="354.5,323.5 360.5,323.5" fill="none" stroke="#000080"/>
<polyline points="357.5,327.5 357.5,350.5 440.5,350.5" fill="none" stroke="#0000ff"/>
<polygon points="542.5,69.5 556.5,69.5 549.5,62.5" fill="none" stroke="#0000ff"/>
<polyline points="549.5,69.5 549.5,98.5" fill="none" stroke="#0000ff"/>
<circle cx="549.5" cy="110.5" r="12.5" fill="none" stroke="#000080"/>
<polyline points="549.5,104.5 549.5,117.5" fill="none" stroke="#000080"/>
<polygon points="547.5,113.5 549.5,117.5 551.5,113.5" fill="none" stroke="#000080"/>
<polyline points="549.5,123.5 549.5,165.5" fill="none" stroke="#0000ff"/>
<polyline points="530.5,165.5 568.5,165.5" fill="none" stroke="#0000ff"/>
<polyline points="530.5,165.5 530.5,184.5" fill="none" stroke="#0000ff"/>
<polyline points="530.5,184.5 530.5,201.5" fill="none" stroke="#000080"/>
<polygon points="524.5,192.5 536.5,192.5 530.5,201.5" fill="none" stroke="#000080"/>
<polyline points="523.5,201.5 537.5,201.5" fill="none" stroke="#000080"/>
<polyline points="568.5,165.5 568.5,184.5" fill="none" stroke="#0000ff"/>
<polyline points="568.5,184.5 568.5,209.5" fill="none" stroke="#000080"/>
<polygon points="561.5,192.5 574.5,192.5 568.5,201.5" fill="none" stroke="#000080"/>
<polyline points="561.5,201.5 574.5,201.5" fill="none" stroke="#000080"/>
<polyline points="568.5,209.5 568.5,264.5" fill="none" stroke="#0000ff"/>
<polyline points="536.5,242.5 536.5,261.5" fill="none" stroke="#0000ff"/>
<polyline points="536.5,261.5 536.5,286.5" fill="none" stroke="#000080"/>
<polygon points="530.5,269.5 542.5,269.5 536.5,278.5" fill="none" stroke="#000080"/>
<polyline points="529.5,278.5 543.5,278.5" fill="none" stroke="#000080"/>
<polyline points="536.5,286.5 536.5,306.5" fill="none" stroke="#0000ff"/>
<polygon points="529.5,306.5 544.5,306.5 536.5,313.5" fill="none" stroke="#0000ff"/>
<circle cx="568.5" cy="276.5" r="12.5" fill="none" stroke="#000080"/>
<polyline points="568.5,270.5 568.5,283.5" fill="none" stroke="#000080"/>
<polygon points="566.5,279.5 568.5,283.5 570.5,279.5" fill="none" stroke="#000080"/>
<polyline points="568.5,289.5 568.5,306.5" fill="none" stroke="#0000ff"/>
<polyline points="536.5,242.5 607.5,242.5" fill="none" stroke="#0000ff"/>
<polygon points="607.5,237.5 624.5,237.5 630.5,242.5 624.5,248.5 607.5,248.5" fill="none" stroke="#0000ff"/>
<polygon points="273.5,191.5 288.5,191.5 280.5,183.5" fill="none" stroke="#0000ff"/>
<polyline points="280.5,191.5 280.5,206.5" fill="none" stroke="#0000ff"/>
<rect x="276.5" y="206.5" width="9.0" height="26.0" fill="none" stroke="#000080"/>
<polyline points="280.5,232.5 280.5,256.5" fill="none" stroke="#0000ff"/>
<polyline points="267.5,256.5 294.5,256.5" fill="none" stroke="#000080"/>
<rect x="274.5" y="259.5" width="13.0" height="4.0" fill="none" stroke="#000080"/>
<polyline points="267.5,266.5 294.5,266.5" fill="none" stroke="#000080"/>
<rect x="274.5" y="269.5" width="13.0" height="4.0" fill="none" stroke="#000080"/>
<polyline points="280.5,273.5 280.5,286.5" fill="none" stroke="#0000ff"/>
<polyline points="272.5,251.5 276.5,251.5" fill="none" stroke="#000000"/>
<polyline points="274.5,250.5 274.5,254.5" fill="none" stroke="#000000"/>
<rect x="336.0" y="112.0" width="5" height="5" fill="#0000ff"/>
<rect x="336.0" y="137.0" width="5" height="5" fill="#0000ff"/>
<rect x="438.0" y="189.0" width="5" height="5" fill="#0000ff"/>
<rect x="496.0" y="189.0" width="5" height="5" fill="#0000ff"/>
<rect x="547.0" y="163.0" width="5" height="5" fill="#0000ff"/>
<rect x="566.0" y="240.0" width="5" height="5" fill="#0000ff"/>
<rect x="438.0" y="348.0" width="5" height="5" fill="#0000ff"/></g>
<text x="235.9" y="18.7" font-size="9.33" font-weight="700" fill="#000000" xml:space="preserve">.param L1 = 300u</text>
<text x="235.9" y="34.6" font-size="9.33" font-weight="700" fill="#000000" xml:space="preserve">.param R = 1Meg</text>
<text x="235.9" y="50.8" font-size="9.33" font-weight="700" fill="#000000" letter-spacing="0.08" xml:space="preserve">.step param R list   0.1 0.5 1 1Meg</text>
<text x="235.9" y="66.7" font-size="9.33" font-weight="700" fill="#0000c8" letter-spacing="0.06" xml:space="preserve">.step param L1 list  300u 303u</text>
<text x="418.5" y="15.5" font-size="11.2" font-weight="400" fill="#0000c8" letter-spacing="-0.3" xml:space="preserve">TARGET</text>
<text x="395.2" y="35.2" font-size="9.33" font-weight="700" fill="#000000" xml:space="preserve">L2</text>
<text x="396.0" y="53.5" font-size="9.33" font-weight="700" fill="#000000" xml:space="preserve">1µ</text>
<text x="471.9" y="37.9" font-size="9.33" font-weight="700" fill="#000000" xml:space="preserve">R9</text>
<text x="471.9" y="52.3" font-size="9.33" font-weight="700" fill="#000000" xml:space="preserve">{R}</text>
<text x="420.7" y="95.6" font-size="9.33" font-weight="700" fill="#000000" xml:space="preserve">K1 L1 L2 0.01</text>
<text x="397.1" y="124.4" font-size="9.33" font-weight="700" fill="#000000" xml:space="preserve">vnoise</text>
<text x="361.6" y="133.0" font-size="9.33" font-weight="700" fill="#000000" xml:space="preserve">R8</text>
<text x="364.7" y="152.2" font-size="9.33" font-weight="700" fill="#000000" xml:space="preserve">1</text>
<text x="456.2" y="150.3" font-size="9.33" font-weight="700" fill="#000000" xml:space="preserve">L1</text>
<text x="453.5" y="168.5" font-size="9.33" font-weight="700" fill="#000000" xml:space="preserve">{L1}</text>
<text x="504.9" y="152.2" font-size="9.33" font-weight="700" fill="#000000" xml:space="preserve">R1</text>
<text x="504.9" y="166.2" font-size="9.33" font-weight="700" fill="#000000" xml:space="preserve">700</text>
<text x="341.6" y="165.6" font-size="9.33" font-weight="700" fill="#000000" xml:space="preserve">C1</text>
<text x="343.1" y="186.1" font-size="9.33" font-weight="700" fill="#000000" xml:space="preserve">100p</text>
<text x="404.3" y="164.5" font-size="9.33" font-weight="700" fill="#000000" xml:space="preserve">0V</text>
<text x="514.1" y="18.7" font-size="9.33" font-weight="700" fill="#000000" letter-spacing="0.06" xml:space="preserve">;noise v(out) vnoise oct 100 1K 100K</text>
<text x="514.6" y="34.3" font-size="9.33" font-weight="700" fill="#000000" xml:space="preserve">.tran 0 300u 220u 10n</text>
<text x="559.3" y="98.8" font-size="9.33" font-weight="700" fill="#000000" xml:space="preserve">I1</text>
<text x="559.3" y="130.4" font-size="9.33" font-weight="700" fill="#000000" letter-spacing="-0.3" xml:space="preserve">3mA</text>
<text x="533.7" y="187.7" font-size="9.33" font-weight="700" fill="#000000" xml:space="preserve">D2</text>
<text x="533.7" y="213.7" font-size="9.33" font-weight="700" fill="#000000" letter-spacing="-0.12" xml:space="preserve">RFU02VS8S</text>
<text x="572.0" y="187.7" font-size="9.33" font-weight="700" fill="#000000" xml:space="preserve">D3</text>
<text x="580.5" y="198.1" font-size="9.33" font-weight="700" fill="#000000" letter-spacing="-0.12" xml:space="preserve">RFU02VS8S</text>
<text x="505.7" y="226.9" font-size="9.33" font-weight="700" fill="#000000" xml:space="preserve">input</text>
<text x="449.7" y="206.9" font-size="9.33" font-weight="700" fill="#000000" xml:space="preserve">D1</text>
<text x="446.8" y="231.0" font-size="9.33" font-weight="700" fill="#000000" letter-spacing="-0.12" xml:space="preserve">MUR460</text>
<text x="448.8" y="258.2" font-size="9.33" font-weight="700" fill="#000000" xml:space="preserve">M1</text>
<text x="448.8" y="274.5" font-size="9.33" font-weight="700" fill="#000000" letter-spacing="-0.3" xml:space="preserve">STW11NM80</text>
<text x="540.1" y="264.6" font-size="9.33" font-weight="700" fill="#000000" xml:space="preserve">D4</text>
<text x="481.7" y="292.6" font-size="9.33" font-weight="700" fill="#000000" letter-spacing="-0.12" xml:space="preserve">RFU02VS8S</text>
<text x="577.8" y="264.6" font-size="9.33" font-weight="700" fill="#000000" xml:space="preserve">I2</text>
<text x="577.8" y="296.3" font-size="9.33" font-weight="700" fill="#000000" letter-spacing="-0.3" xml:space="preserve">1.5mA</text>
<text x="601.0" y="279.0" font-size="14.9" font-weight="700" fill="#0000c8" letter-spacing="-0.28" xml:space="preserve">I2 = I1 / 2</text>
<text x="286.6" y="216.8" font-size="9.33" font-weight="700" fill="#000000" letter-spacing="-0.12" xml:space="preserve">Rseries1</text>
<text x="286.6" y="231.0" font-size="9.33" font-weight="700" fill="#000000" xml:space="preserve">0.01</text>
<text x="290.3" y="252.1" font-size="9.33" font-weight="700" fill="#000000" xml:space="preserve">Vbatt1</text>
<text x="290.3" y="286.2" font-size="9.33" font-weight="700" fill="#000000" xml:space="preserve">12V</text>
<text x="313.0" y="321.8" font-size="9.33" font-weight="700" fill="#000000" xml:space="preserve">Vgs1</text>
<text x="446.8" y="312.7" font-size="9.33" font-weight="700" fill="#000000" xml:space="preserve">R7</text>
<text x="446.8" y="327.1" font-size="9.33" font-weight="700" fill="#000000" xml:space="preserve">6</text>
<text x="271.0" y="375.1" font-size="9.33" font-weight="700" fill="#000000" xml:space="preserve">PULSE(0 12 20u 60n 60n 200u 1m)</text>
<text x="442.0" y="390.3" font-size="9.33" font-weight="700" fill="#000000" transform="rotate(-90 442.0 390.3)" xml:space="preserve">-Vbatt</text>
<text x="282.6" y="313.7" font-size="9.33" font-weight="700" fill="#000000" transform="rotate(-90 282.6 313.7)" xml:space="preserve">-Vbatt</text>
<text x="570.1" y="332.6" font-size="9.33" font-weight="700" fill="#000000" transform="rotate(-90 570.1 332.6)" xml:space="preserve">-Vbatt</text>
<text x="608.5" y="245.7" font-size="9.33" font-weight="700" fill="#000000" xml:space="preserve">out</text></svg></div>
</div>
<div class="win in" style="left:960px;top:560px;width:958px;height:458px">
<div class="hl"></div>
<div class="abs" style="left:9px;top:10px;width:17px;height:18px"><svg width="17" height="17" viewBox="0 0 17 17" shape-rendering="crispEdges"><rect x="3" y="0" width="13" height="13" fill="#c0c0c0"/><rect x="2" y="0" width="1" height="16" fill="#000"/><rect x="0" y="14" width="16" height="1" fill="#000"/><g fill="#000"><rect x="0" y="2" width="2" height="1"/><rect x="0" y="5" width="2" height="1"/><rect x="0" y="8" width="2" height="1"/><rect x="0" y="11" width="2" height="1"/><rect x="5" y="15" width="1" height="2"/><rect x="8" y="15" width="1" height="2"/><rect x="11" y="15" width="1" height="2"/><rect x="14" y="15" width="1" height="2"/><rect x="2" y="15" width="1" height="2"/></g><polyline points="3,9 5.6,5.2 7.6,4.8 9.6,7.2 11.6,7.2 13.6,5.6 16,3.2" fill="none" stroke="#ff0000" stroke-width="1.6" shape-rendering="auto"/></svg></div>
<div class="tt" style="letter-spacing:-0.34px">PI_diode_switch_2</div>
<div class="wb x" style="left:916px"><svg width="29" height="16" viewBox="0 0 29 16"><path d="M9.2 3.6L12.6 3.6L14.5 6.2L16.4 3.6L19.8 3.6L16.4 7.9L19.8 12.2L16.4 12.2L14.5 9.6L12.6 12.2L9.2 12.2L12.6 7.9Z" fill="#fff" stroke="#50566a" stroke-width="1" stroke-linejoin="round"/></svg></div>
<div class="wb max" style="left:882px"><svg width="29" height="16" viewBox="0 0 29 16"><rect x="9.5" y="3.5" width="10" height="8" rx="1" fill="#fff" stroke="#50566a" stroke-width="1"/><rect x="12.5" y="6.5" width="4" height="2.2" fill="#c4d3e7" stroke="#50566a" stroke-width="1"/></svg></div>
<div class="wb min" style="left:848px"><svg width="29" height="16" viewBox="0 0 29 16"><rect x="9.5" y="8.2" width="10" height="3.4" rx="1" fill="#fff" stroke="#50566a" stroke-width="1"/></svg></div>
<div class="cl" style="background:#000"><svg width="938" height="415" viewBox="0 0 938 415" font-family="Liberation Sans">
<g shape-rendering="crispEdges" fill="none">
<g stroke="#808080" stroke-width="1" stroke-dasharray="3 3">
<path d="M139.5 20.0V389.5"/>
<path d="M225.5 20.0V389.5"/>
<path d="M312.5 20.0V389.5"/>
<path d="M398.5 20.0V389.5"/>
<path d="M485.5 20.0V389.5"/>
<path d="M572.5 20.0V389.5"/>
<path d="M658.5 20.0V389.5"/>
<path d="M745.5 20.0V389.5"/>
<path d="M831.5 20.0V389.5"/>
<path d="M54.0 40.5H918.5"/>
<path d="M54.0 62.5H918.5"/>
<path d="M54.0 83.5H918.5"/>
<path d="M54.0 105.5H918.5"/>
<path d="M54.0 127.5H918.5"/>
<path d="M54.0 149.5H918.5"/>
<path d="M54.0 171.5H918.5"/>
<path d="M54.0 193.5H918.5"/>
<path d="M54.0 214.5H918.5"/>
<path d="M54.0 236.5H918.5"/>
<path d="M54.0 258.5H918.5"/>
<path d="M54.0 280.5H918.5"/>
<path d="M54.0 302.5H918.5"/>
<path d="M54.0 324.5H918.5"/>
<path d="M54.0 345.5H918.5"/>
<path d="M54.0 367.5H918.5"/>
</g>
<rect x="52.5" y="18.5" width="866.0" height="371.0" stroke="#c0c0c0" stroke-width="1"/>
<g stroke="#c0c0c0" stroke-width="1">
<path d="M139.5 389.5V396.5"/>
<path d="M225.5 389.5V396.5"/>
<path d="M312.5 389.5V396.5"/>
<path d="M398.5 389.5V396.5"/>
<path d="M485.5 389.5V396.5"/>
<path d="M572.5 389.5V396.5"/>
<path d="M658.5 389.5V396.5"/>
<path d="M745.5 389.5V396.5"/>
<path d="M831.5 389.5V396.5"/>
<path d="M52.5 389.5V396.5"/>
<path d="M918.5 389.5V396.5"/>
<path d="M45.0 40.5H52.5"/>
<path d="M45.0 62.5H52.5"/>
<path d="M45.0 83.5H52.5"/>
<path d="M45.0 105.5H52.5"/>
<path d="M45.0 127.5H52.5"/>
<path d="M45.0 149.5H52.5"/>
<path d="M45.0 171.5H52.5"/>
<path d="M45.0 193.5H52.5"/>
<path d="M45.0 214.5H52.5"/>
<path d="M45.0 236.5H52.5"/>
<path d="M45.0 258.5H52.5"/>
<path d="M45.0 280.5H52.5"/>
<path d="M45.0 302.5H52.5"/>
<path d="M45.0 324.5H52.5"/>
<path d="M45.0 345.5H52.5"/>
<path d="M45.0 367.5H52.5"/>
<path d="M45.0 389.5H52.5"/>
</g></g>
<g stroke="#c0c0c0" stroke-width="1" shape-rendering="crispEdges"><path d="M49.0 33.5H52.5"/><path d="M49.0 29.5H52.5"/><path d="M49.0 27.5H52.5"/><path d="M49.0 24.5H52.5"/><path d="M49.0 23.5H52.5"/><path d="M49.0 21.5H52.5"/><path d="M49.0 20.5H52.5"/><path d="M49.0 55.5H52.5"/><path d="M49.0 51.5H52.5"/><path d="M49.0 48.5H52.5"/><path d="M49.0 46.5H52.5"/><path d="M49.0 45.5H52.5"/><path d="M49.0 43.5H52.5"/><path d="M49.0 42.5H52.5"/><path d="M49.0 41.5H52.5"/><path d="M49.0 77.5H52.5"/><path d="M49.0 73.5H52.5"/><path d="M49.0 70.5H52.5"/><path d="M49.0 68.5H52.5"/><path d="M49.0 66.5H52.5"/><path d="M49.0 65.5H52.5"/><path d="M49.0 64.5H52.5"/><path d="M49.0 63.5H52.5"/><path d="M49.0 99.5H52.5"/><path d="M49.0 95.5H52.5"/><path d="M49.0 92.5H52.5"/><path d="M49.0 90.5H52.5"/><path d="M49.0 88.5H52.5"/><path d="M49.0 87.5H52.5"/><path d="M49.0 86.5H52.5"/><path d="M49.0 84.5H52.5"/><path d="M49.0 121.5H52.5"/><path d="M49.0 117.5H52.5"/><path d="M49.0 114.5H52.5"/><path d="M49.0 112.5H52.5"/><path d="M49.0 110.5H52.5"/><path d="M49.0 109.5H52.5"/><path d="M49.0 107.5H52.5"/><path d="M49.0 106.5H52.5"/><path d="M49.0 142.5H52.5"/><path d="M49.0 138.5H52.5"/><path d="M49.0 136.5H52.5"/><path d="M49.0 134.5H52.5"/><path d="M49.0 132.5H52.5"/><path d="M49.0 130.5H52.5"/><path d="M49.0 129.5H52.5"/><path d="M49.0 128.5H52.5"/><path d="M49.0 164.5H52.5"/><path d="M49.0 160.5H52.5"/><path d="M49.0 158.5H52.5"/><path d="M49.0 155.5H52.5"/><path d="M49.0 154.5H52.5"/><path d="M49.0 152.5H52.5"/><path d="M49.0 151.5H52.5"/><path d="M49.0 150.5H52.5"/><path d="M49.0 186.5H52.5"/><path d="M49.0 182.5H52.5"/><path d="M49.0 179.5H52.5"/><path d="M49.0 177.5H52.5"/><path d="M49.0 176.5H52.5"/><path d="M49.0 174.5H52.5"/><path d="M49.0 173.5H52.5"/><path d="M49.0 172.5H52.5"/><path d="M49.0 208.5H52.5"/><path d="M49.0 204.5H52.5"/><path d="M49.0 201.5H52.5"/><path d="M49.0 199.5H52.5"/><path d="M49.0 197.5H52.5"/><path d="M49.0 196.5H52.5"/><path d="M49.0 195.5H52.5"/><path d="M49.0 194.5H52.5"/><path d="M49.0 230.5H52.5"/><path d="M49.0 226.5H52.5"/><path d="M49.0 223.5H52.5"/><path d="M49.0 221.5H52.5"/><path d="M49.0 219.5H52.5"/><path d="M49.0 218.5H52.5"/><path d="M49.0 217.5H52.5"/><path d="M49.0 215.5H52.5"/><path d="M49.0 252.5H52.5"/><path d="M49.0 248.5H52.5"/><path d="M49.0 245.5H52.5"/><path d="M49.0 243.5H52.5"/><path d="M49.0 241.5H52.5"/><path d="M49.0 240.5H52.5"/><path d="M49.0 238.5H52.5"/><path d="M49.0 237.5H52.5"/><path d="M49.0 273.5H52.5"/><path d="M49.0 269.5H52.5"/><path d="M49.0 267.5H52.5"/><path d="M49.0 265.5H52.5"/><path d="M49.0 263.5H52.5"/><path d="M49.0 261.5H52.5"/><path d="M49.0 260.5H52.5"/><path d="M49.0 259.5H52.5"/><path d="M49.0 295.5H52.5"/><path d="M49.0 291.5H52.5"/><path d="M49.0 289.5H52.5"/><path d="M49.0 286.5H52.5"/><path d="M49.0 285.5H52.5"/><path d="M49.0 283.5H52.5"/><path d="M49.0 282.5H52.5"/><path d="M49.0 281.5H52.5"/><path d="M49.0 317.5H52.5"/><path d="M49.0 313.5H52.5"/><path d="M49.0 310.5H52.5"/><path d="M49.0 308.5H52.5"/><path d="M49.0 307.5H52.5"/><path d="M49.0 305.5H52.5"/><path d="M49.0 304.5H52.5"/><path d="M49.0 303.5H52.5"/><path d="M49.0 339.5H52.5"/><path d="M49.0 335.5H52.5"/><path d="M49.0 332.5H52.5"/><path d="M49.0 330.5H52.5"/><path d="M49.0 328.5H52.5"/><path d="M49.0 327.5H52.5"/><path d="M49.0 326.5H52.5"/><path d="M49.0 325.5H52.5"/><path d="M49.0 361.5H52.5"/><path d="M49.0 357.5H52.5"/><path d="M49.0 354.5H52.5"/><path d="M49.0 352.5H52.5"/><path d="M49.0 350.5H52.5"/><path d="M49.0 349.5H52.5"/><path d="M49.0 348.5H52.5"/><path d="M49.0 346.5H52.5"/><path d="M49.0 383.5H52.5"/><path d="M49.0 379.5H52.5"/><path d="M49.0 376.5H52.5"/><path d="M49.0 374.5H52.5"/><path d="M49.0 372.5H52.5"/><path d="M49.0 371.5H52.5"/><path d="M49.0 369.5H52.5"/><path d="M49.0 368.5H52.5"/></g>
<text x="42.6" y="45.1" text-anchor="end" font-size="14" font-weight="400" fill="#c8c8c8" letter-spacing="-0.15" stroke="#c8c8c8" stroke-width="0.45">1</text>
<text x="42.6" y="67.1" text-anchor="end" font-size="14" font-weight="400" fill="#c8c8c8" letter-spacing="-0.15" stroke="#c8c8c8" stroke-width="0.45">0.1</text>
<text x="42.6" y="88.1" text-anchor="end" font-size="14" font-weight="400" fill="#c8c8c8" letter-spacing="-0.15" stroke="#c8c8c8" stroke-width="0.45">0.01</text>
<text x="42.6" y="110.1" text-anchor="end" font-size="14" font-weight="400" fill="#c8c8c8" letter-spacing="-0.15" stroke="#c8c8c8" stroke-width="0.45">0.001</text>
<text x="42.6" y="132.1" text-anchor="end" font-size="14" font-weight="400" fill="#c8c8c8" letter-spacing="-0.15" stroke="#c8c8c8" stroke-width="0.45">0.0001</text>
<text x="42.6" y="154.1" text-anchor="end" font-size="14" font-weight="400" fill="#c8c8c8" letter-spacing="-0.15" stroke="#c8c8c8" stroke-width="0.45">1e-005</text>
<text x="42.6" y="176.1" text-anchor="end" font-size="14" font-weight="400" fill="#c8c8c8" letter-spacing="-0.15" stroke="#c8c8c8" stroke-width="0.45">1e-006</text>
<text x="42.6" y="198.1" text-anchor="end" font-size="14" font-weight="400" fill="#c8c8c8" letter-spacing="-0.15" stroke="#c8c8c8" stroke-width="0.45">1e-007</text>
<text x="42.6" y="219.1" text-anchor="end" font-size="14" font-weight="400" fill="#c8c8c8" letter-spacing="-0.15" stroke="#c8c8c8" stroke-width="0.45">1e-008</text>
<text x="42.6" y="241.1" text-anchor="end" font-size="14" font-weight="400" fill="#c8c8c8" letter-spacing="-0.15" stroke="#c8c8c8" stroke-width="0.45">1e-009</text>
<text x="42.6" y="263.1" text-anchor="end" font-size="14" font-weight="400" fill="#c8c8c8" letter-spacing="-0.15" stroke="#c8c8c8" stroke-width="0.45">1e-010</text>
<text x="42.6" y="285.1" text-anchor="end" font-size="14" font-weight="400" fill="#c8c8c8" letter-spacing="-0.15" stroke="#c8c8c8" stroke-width="0.45">1e-011</text>
<text x="42.6" y="307.1" text-anchor="end" font-size="14" font-weight="400" fill="#c8c8c8" letter-spacing="-0.15" stroke="#c8c8c8" stroke-width="0.45">1e-012</text>
<text x="42.6" y="329.1" text-anchor="end" font-size="14" font-weight="400" fill="#c8c8c8" letter-spacing="-0.15" stroke="#c8c8c8" stroke-width="0.45">1e-013</text>
<text x="42.6" y="350.1" text-anchor="end" font-size="14" font-weight="400" fill="#c8c8c8" letter-spacing="-0.15" stroke="#c8c8c8" stroke-width="0.45">1e-014</text>
<text x="42.6" y="372.1" text-anchor="end" font-size="14" font-weight="400" fill="#c8c8c8" letter-spacing="-0.15" stroke="#c8c8c8" stroke-width="0.45">1e-015</text>
<text x="42.6" y="394.1" text-anchor="end" font-size="14" font-weight="400" fill="#c8c8c8" letter-spacing="-0.15" stroke="#c8c8c8" stroke-width="0.45">1e-016</text>
<text x="52.5" y="409.5" text-anchor="middle" font-size="14" font-weight="400" fill="#c8c8c8" letter-spacing="-0.15" stroke="#c8c8c8" stroke-width="0.45">0µs</text>
<text x="139.5" y="409.5" text-anchor="middle" font-size="14" font-weight="400" fill="#c8c8c8" letter-spacing="-0.15" stroke="#c8c8c8" stroke-width="0.45">10µs</text>
<text x="225.5" y="409.5" text-anchor="middle" font-size="14" font-weight="400" fill="#c8c8c8" letter-spacing="-0.15" stroke="#c8c8c8" stroke-width="0.45">20µs</text>
<text x="312.5" y="409.5" text-anchor="middle" font-size="14" font-weight="400" fill="#c8c8c8" letter-spacing="-0.15" stroke="#c8c8c8" stroke-width="0.45">30µs</text>
<text x="398.5" y="409.5" text-anchor="middle" font-size="14" font-weight="400" fill="#c8c8c8" letter-spacing="-0.15" stroke="#c8c8c8" stroke-width="0.45">40µs</text>
<text x="485.5" y="409.5" text-anchor="middle" font-size="14" font-weight="400" fill="#c8c8c8" letter-spacing="-0.15" stroke="#c8c8c8" stroke-width="0.45">50µs</text>
<text x="572.5" y="409.5" text-anchor="middle" font-size="14" font-weight="400" fill="#c8c8c8" letter-spacing="-0.15" stroke="#c8c8c8" stroke-width="0.45">60µs</text>
<text x="658.5" y="409.5" text-anchor="middle" font-size="14" font-weight="400" fill="#c8c8c8" letter-spacing="-0.15" stroke="#c8c8c8" stroke-width="0.45">70µs</text>
<text x="745.5" y="409.5" text-anchor="middle" font-size="14" font-weight="400" fill="#c8c8c8" letter-spacing="-0.15" stroke="#c8c8c8" stroke-width="0.45">80µs</text>
<text x="831.5" y="409.5" text-anchor="middle" font-size="14" font-weight="400" fill="#c8c8c8" letter-spacing="-0.15" stroke="#c8c8c8" stroke-width="0.45">90µs</text>
<text x="918.0" y="409.5" text-anchor="middle" font-size="14" font-weight="400" fill="#c8c8c8" letter-spacing="-0.15" stroke="#c8c8c8" stroke-width="0.45">100µs</text>
<text x="485.0" y="13.0" text-anchor="middle" font-size="13.8" font-weight="700" fill="#fff" textLength="35.4" lengthAdjust="spacingAndGlyphs">V(out)</text>
<polyline points="96.0,93.0 97.6,94.3 99.3,95.3 101.1,96.2 103.0,96.9 104.9,97.5 106.8,98.1 108.8,98.5 110.7,98.8 112.7,99.2 114.7,99.5 116.7,99.8 118.6,100.1 120.6,100.3 122.6,100.6 124.6,100.8 126.7,101.0 128.7,101.2 130.7,101.5 132.7,101.7 134.7,101.9 136.7,102.1 138.7,102.3 140.7,102.6 142.7,102.8 144.7,103.1 146.7,103.3 148.7,103.5 150.7,103.8 152.7,104.0 154.6,104.2 156.6,104.5 158.6,104.7 160.6,104.9 162.6,105.2 164.6,105.4 166.6,105.6 168.6,105.8 170.6,106.1 172.6,106.3 174.6,106.5 176.6,106.7 178.6,106.9 180.6,107.2 182.6,107.4 184.6,107.6 186.6,107.8 188.6,108.0 190.6,108.2 192.6,108.5 194.6,108.7 196.6,108.9 198.6,109.1 200.6,109.3 202.6,109.5 204.6,109.8 206.6,110.0 208.6,110.2 210.6,110.4 212.6,110.6 214.6,110.8 216.6,111.0 218.5,111.2 220.5,111.5 222.5,111.7 224.5,111.9 226.5,112.1 228.5,112.3 230.5,112.5 232.5,112.8 234.5,113.0 236.5,113.2 238.5,113.4 240.5,113.6 242.5,113.8 244.5,114.0 246.5,114.2 248.5,114.5 250.5,114.7 252.5,114.9 254.5,115.1 256.5,115.3 258.5,115.5 260.5,115.7 262.5,115.9 264.5,116.1 266.5,116.3 268.5,116.6 270.5,116.8 272.5,117.0 274.5,117.2 276.5,117.4 278.5,117.6 280.5,117.8 282.5,118.0 284.5,118.2 286.5,118.4 288.5,118.6 290.5,118.9 292.5,119.1 294.5,119.3 296.5,119.5 298.5,119.7 300.5,119.9 302.5,120.1 304.5,120.3 306.4,120.5 308.4,120.8 310.4,121.0 312.4,121.2 314.4,121.4 316.4,121.6 318.4,121.8 320.4,122.1 322.4,122.3 324.4,122.5 326.4,122.7 328.4,122.9 330.4,123.2 332.4,123.4 334.4,123.6 336.4,123.8 338.4,124.0 340.4,124.3 342.4,124.5 344.4,124.7 346.4,124.9 348.4,125.1 350.4,125.4 352.4,125.6 354.4,125.8 356.4,126.0 358.4,126.3 360.4,126.5 362.4,126.7 364.4,126.9 366.4,127.2 368.3,127.4 370.3,127.6 372.3,127.8 374.3,128.0 376.3,128.3 378.3,128.5 380.3,128.7 382.3,128.9 384.3,129.1 386.3,129.4 388.3,129.6 390.3,129.8 392.3,130.0 394.3,130.2 396.3,130.4 398.3,130.7 400.3,130.9 402.3,131.1 404.3,131.3 406.3,131.5 408.3,131.7 410.3,131.9 412.3,132.1 414.3,132.3 416.3,132.6 418.3,132.8 420.3,133.0 422.3,133.2 424.3,133.4 426.3,133.6 428.3,133.8 430.3,134.0 432.3,134.2 434.3,134.4 436.3,134.6 438.3,134.8 440.3,135.0 442.3,135.3 444.3,135.5 446.3,135.7 448.3,135.9 450.2,136.1 452.2,136.3 454.2,136.5 456.2,136.7 458.2,136.9 460.2,137.1 462.2,137.4 464.2,137.6 466.2,137.8 468.2,138.0 470.2,138.2 472.2,138.4 474.2,138.7 476.2,138.9 478.2,139.1 480.2,139.3 482.2,139.6 484.2,139.8 486.2,140.0 488.2,140.2 490.2,140.5 492.2,140.7 494.2,140.9 496.2,141.1 498.2,141.4 500.2,141.6 502.2,141.8 504.2,142.1 506.2,142.3 508.1,142.5 510.1,142.8 512.1,143.0 514.1,143.2 516.1,143.5 518.1,143.7 520.1,143.9 522.1,144.2 524.1,144.4 526.1,144.6 528.1,144.9 530.1,145.1 532.1,145.3 534.1,145.6 536.1,145.8 538.1,146.0 540.1,146.3 542.1,146.5 544.1,146.7 546.1,147.0 548.1,147.2 550.0,147.4 552.0,147.7 554.0,147.9 556.0,148.1 558.0,148.4 560.0,148.6 562.0,148.8 564.0,149.0 566.0,149.3 568.0,149.5 570.0,149.7 572.0,149.9 574.0,150.2 576.0,150.4 578.0,150.6 580.0,150.8 582.0,151.1 584.0,151.3 586.0,151.5 588.0,151.7 590.0,152.0 592.0,152.2 594.0,152.4 596.0,152.6 598.0,152.8 600.0,153.1 602.0,153.3 603.9,153.5 605.9,153.7 607.9,153.9 609.9,154.2 611.9,154.4 613.9,154.6 615.9,154.8 617.9,155.0 619.9,155.2 621.9,155.5 623.9,155.7 625.9,155.9 627.9,156.1 629.9,156.3 631.9,156.6 633.9,156.8 635.9,157.0 637.9,157.2 639.9,157.4 641.9,157.7 643.9,157.9 645.9,158.1 647.9,158.3 649.9,158.5 651.9,158.7 653.9,159.0 655.9,159.2 657.9,159.4 659.9,159.6 661.9,159.8 663.9,160.1 665.9,160.3 667.8,160.5 669.8,160.7 671.8,161.0 673.8,161.2 675.8,161.4 677.8,161.6 679.8,161.8 681.8,162.1 683.8,162.3 685.8,162.5 687.8,162.7 689.8,162.9 691.8,163.2 693.8,163.4 695.8,163.6 697.8,163.8 699.8,164.0 701.8,164.3 703.8,164.5 705.8,164.7 707.8,164.9 709.8,165.1 711.8,165.4 713.8,165.6 715.8,165.8 717.8,166.0 719.8,166.2 721.8,166.5 723.8,166.7 725.8,166.9 727.7,167.1 729.7,167.3 731.7,167.6 733.7,167.8 735.7,168.0 737.7,168.2 739.7,168.4 741.7,168.6 743.7,168.9 745.7,169.1 747.7,169.3 749.7,169.5 751.7,169.7 753.7,169.9 755.7,170.2 757.7,170.4 759.7,170.6 761.7,170.8 763.7,171.0 765.7,171.2 767.7,171.4 769.7,171.7 771.7,171.9 773.7,172.1 775.7,172.3 777.7,172.5 779.7,172.7 781.7,172.9 783.7,173.1 785.7,173.4 787.7,173.6 789.7,173.8 791.7,174.0 793.7,174.2 795.7,174.4 797.7,174.6 799.7,174.8 801.7,175.1 803.7,175.3 805.6,175.5 807.6,175.7 809.6,175.9 811.6,176.1 813.6,176.3 815.6,176.5 817.6,176.8 819.6,177.0 821.6,177.2 823.6,177.4 825.6,177.6 827.6,177.8 829.6,178.0 831.6,178.2 833.6,178.5 835.6,178.7 837.6,178.9 839.6,179.1 841.6,179.3 843.6,179.5 845.6,179.7 847.6,180.0 849.6,180.2 851.6,180.4 853.6,180.6 855.6,180.8 857.6,181.0 859.6,181.2 861.6,181.5 863.6,181.7 865.6,181.9 867.6,182.1 869.6,182.3 871.6,182.5 873.6,182.8 875.6,183.0 877.6,183.2 879.6,183.4 881.5,183.6 883.5,183.8 885.5,184.0 887.5,184.3 889.5,184.5 891.5,184.7 893.5,184.9 895.5,185.1 897.5,185.3 899.5,185.6 901.5,185.8 903.5,186.0 905.5,186.2 907.5,186.4 909.5,186.6 911.5,186.9 913.5,187.1 915.5,187.3 917.5,187.5" fill="none" stroke="#ffffff" stroke-width="1" shape-rendering="crispEdges"/>
<polyline points="92.0,85.0 93.0,86.8 94.0,88.5 95.1,90.2 96.3,91.9 97.5,93.6 98.7,95.2 99.9,96.8 101.3,98.3 102.7,99.7 104.2,100.9 105.7,102.2 107.4,103.3 109.1,104.4 110.8,105.5 112.6,106.5 114.4,107.6 116.2,108.6 118.0,109.6 119.7,110.5 121.5,111.5 123.3,112.5 125.1,113.4 126.9,114.3 128.7,115.2 130.5,116.1 132.3,116.9 134.2,117.8 136.0,118.7 137.8,119.6 139.6,120.5 141.4,121.4 143.2,122.4 145.0,123.3 146.8,124.3 148.5,125.2 150.3,126.2 152.1,127.2 153.9,128.1 155.6,129.1 157.4,130.1 159.2,131.1 160.9,132.1 162.7,133.0 164.5,134.0 166.2,135.0 168.0,136.0 169.7,137.0 171.5,138.0 173.3,139.0 175.0,140.0 176.8,141.0 178.6,141.9 180.3,142.9 182.1,143.9 183.9,144.9 185.6,145.8 187.4,146.8 189.2,147.8 191.0,148.7 192.8,149.7 194.6,150.6 196.3,151.5 198.1,152.5 200.0,153.4 201.8,154.3 203.6,155.2 205.4,156.1 207.2,157.0 209.0,158.0 210.8,158.9 212.6,159.8 214.4,160.7 216.2,161.6 218.0,162.5 219.8,163.4 221.6,164.4 223.4,165.3 225.2,166.2 227.0,167.2 228.8,168.1 230.6,169.1 232.3,170.1 234.1,171.1 235.8,172.0 237.6,173.1 239.3,174.1 241.0,175.1 242.7,176.2 244.4,177.3 246.1,178.5 247.8,179.6 249.4,180.8 251.1,181.9 252.7,183.1 254.4,184.2 256.1,185.3 257.8,186.4 259.5,187.5 261.2,188.5 263.0,189.6 264.7,190.6 266.4,191.6 268.2,192.6 270.0,193.6 271.7,194.6 273.5,195.6 275.3,196.6 277.0,197.6 278.8,198.5 280.6,199.5 282.4,200.5 284.1,201.4 285.9,202.4 287.7,203.3 289.5,204.2 291.3,205.2 293.1,206.1 294.9,207.0 296.7,208.0 298.5,208.9 300.3,209.8 302.1,210.7 303.9,211.6 305.7,212.4 307.6,213.3 309.4,214.2 311.2,215.1 313.0,216.0 314.9,216.8 316.7,217.7 318.5,218.5 320.4,219.3 322.2,220.2 324.1,221.0 325.9,221.8 327.8,222.6 329.6,223.4 331.5,224.3 333.3,225.1 335.1,225.9 337.0,226.8 338.8,227.6 340.6,228.5 342.4,229.4 344.2,230.4 346.0,231.3 347.8,232.3 349.6,233.3 351.4,234.2 353.2,235.2 355.0,236.1 356.8,236.9 358.7,237.7 360.5,238.4 362.4,239.1 364.3,239.7 366.2,240.3 368.2,240.9 370.1,241.5 372.1,242.0 374.1,242.6 376.0,243.1 378.0,243.5 380.0,244.0 381.9,244.4 383.9,244.8 385.9,245.3 387.9,245.6 389.8,246.0 391.8,246.4 393.8,246.7 395.8,247.1 397.8,247.4 399.8,247.7 401.8,248.0 403.8,248.2 405.8,248.5 407.8,248.8 409.8,249.0 411.9,249.2 413.9,249.4 415.9,249.6 417.9,249.7 419.9,249.9 421.9,250.0 423.9,250.2 426.0,250.3 428.0,250.4 430.0,250.5" fill="none" stroke="#0000ff" stroke-width="1" shape-rendering="crispEdges"/>
<polyline points="90.0,79.0 90.8,80.9 91.5,82.8 92.3,84.7 93.0,86.6 93.7,88.5 94.4,90.4 95.1,92.3 95.8,94.2 96.4,96.1 97.0,98.1 97.6,100.0 98.2,102.0 98.8,103.9 99.5,105.8 100.3,107.7 101.1,109.6 101.9,111.4 102.7,113.3 103.6,115.1 104.6,116.9 105.6,118.7 106.6,120.5 107.6,122.2 108.7,123.8 109.9,125.5 111.2,127.0 112.5,128.6 113.9,130.1 115.2,131.7 116.6,133.2 118.0,134.7 119.3,136.2 120.7,137.8 122.0,139.3 123.3,140.8 124.6,142.4 126.0,143.9 127.3,145.5 128.7,147.0 130.0,148.5 131.3,150.0 132.7,151.5 134.1,153.1 135.4,154.6 136.8,156.1 138.2,157.5 139.6,159.0 141.0,160.5 142.4,162.0 143.8,163.4 145.2,164.9 146.6,166.3 148.1,167.8 149.5,169.2 150.9,170.6 152.4,172.0 153.8,173.5 155.3,174.9 156.7,176.3 158.2,177.7 159.6,179.2 161.1,180.6 162.5,182.0 164.0,183.5 165.4,184.9 166.8,186.3 168.3,187.8 169.7,189.2 171.1,190.7 172.6,192.1 174.0,193.5 175.4,195.0 176.9,196.4 178.3,197.9 179.7,199.4 181.1,200.8 182.5,202.3 183.9,203.8 185.3,205.3 186.6,206.8 187.9,208.3 189.2,209.9 190.6,211.4 191.9,213.0 193.2,214.6 194.5,216.1 195.8,217.6 197.2,219.1 198.5,220.6 199.9,222.1 201.3,223.7 202.7,225.2 204.1,226.7 205.5,228.2 206.9,229.7 208.3,231.1 209.8,232.5 211.3,233.9 212.8,235.2 214.3,236.5 215.9,237.7 217.5,239.0 219.2,240.2 220.9,241.5 222.6,242.7 224.4,243.8 226.2,244.7 228.0,245.5 229.9,246.2 231.7,246.6 233.7,247.0 235.7,247.4 237.7,247.7 239.7,248.0 241.8,248.3 243.8,248.5 245.9,248.8 247.9,249.1 249.9,249.3 251.9,249.6 253.9,249.8 256.0,250.1 258.0,250.3 260.0,250.5" fill="none" stroke="#ff0000" stroke-width="1" shape-rendering="crispEdges"/>
<polyline points="53.5,39.5 55.0,41.5 76.0,41.5 80.0,47.0 85.0,59.5 91.2,82.0 97.5,102.0 105.0,127.0 115.0,159.5 123.7,187.0 126.2,197.0 140.0,222.0 152.5,250.5 918.0,250.5" fill="none" stroke="#00b4b4" stroke-width="1" shape-rendering="crispEdges"/>
<polyline points="252.0,250.5 270.0,250.5" fill="none" stroke="#ff0000" stroke-width="1" shape-rendering="crispEdges"/>
<polyline points="450.0,250.5 470.0,250.5" fill="none" stroke="#ff0000" stroke-width="1" shape-rendering="crispEdges"/>
<polyline points="580.0,250.5 605.0,250.5" fill="none" stroke="#0000ff" stroke-width="1" shape-rendering="crispEdges"/>
<polyline points="790.0,250.5 820.0,250.5" fill="none" stroke="#0000ff" stroke-width="1" shape-rendering="crispEdges"/>
<polyline points="845.0,250.5 865.0,250.5" fill="none" stroke="#ff0000" stroke-width="1" shape-rendering="crispEdges"/>
<polyline points="420.0,250.5 450.0,250.5" fill="none" stroke="#0000ff" stroke-width="1" shape-rendering="crispEdges"/>
<polyline points="500.0,250.5 530.0,250.5" fill="none" stroke="#ff0000" stroke-width="1" shape-rendering="crispEdges"/>
<polyline points="53.5,41.0 53.5,389.0" fill="none" stroke="#00b4b4" stroke-width="1" shape-rendering="crispEdges"/>
</svg></div>
</div>
</body></html>
